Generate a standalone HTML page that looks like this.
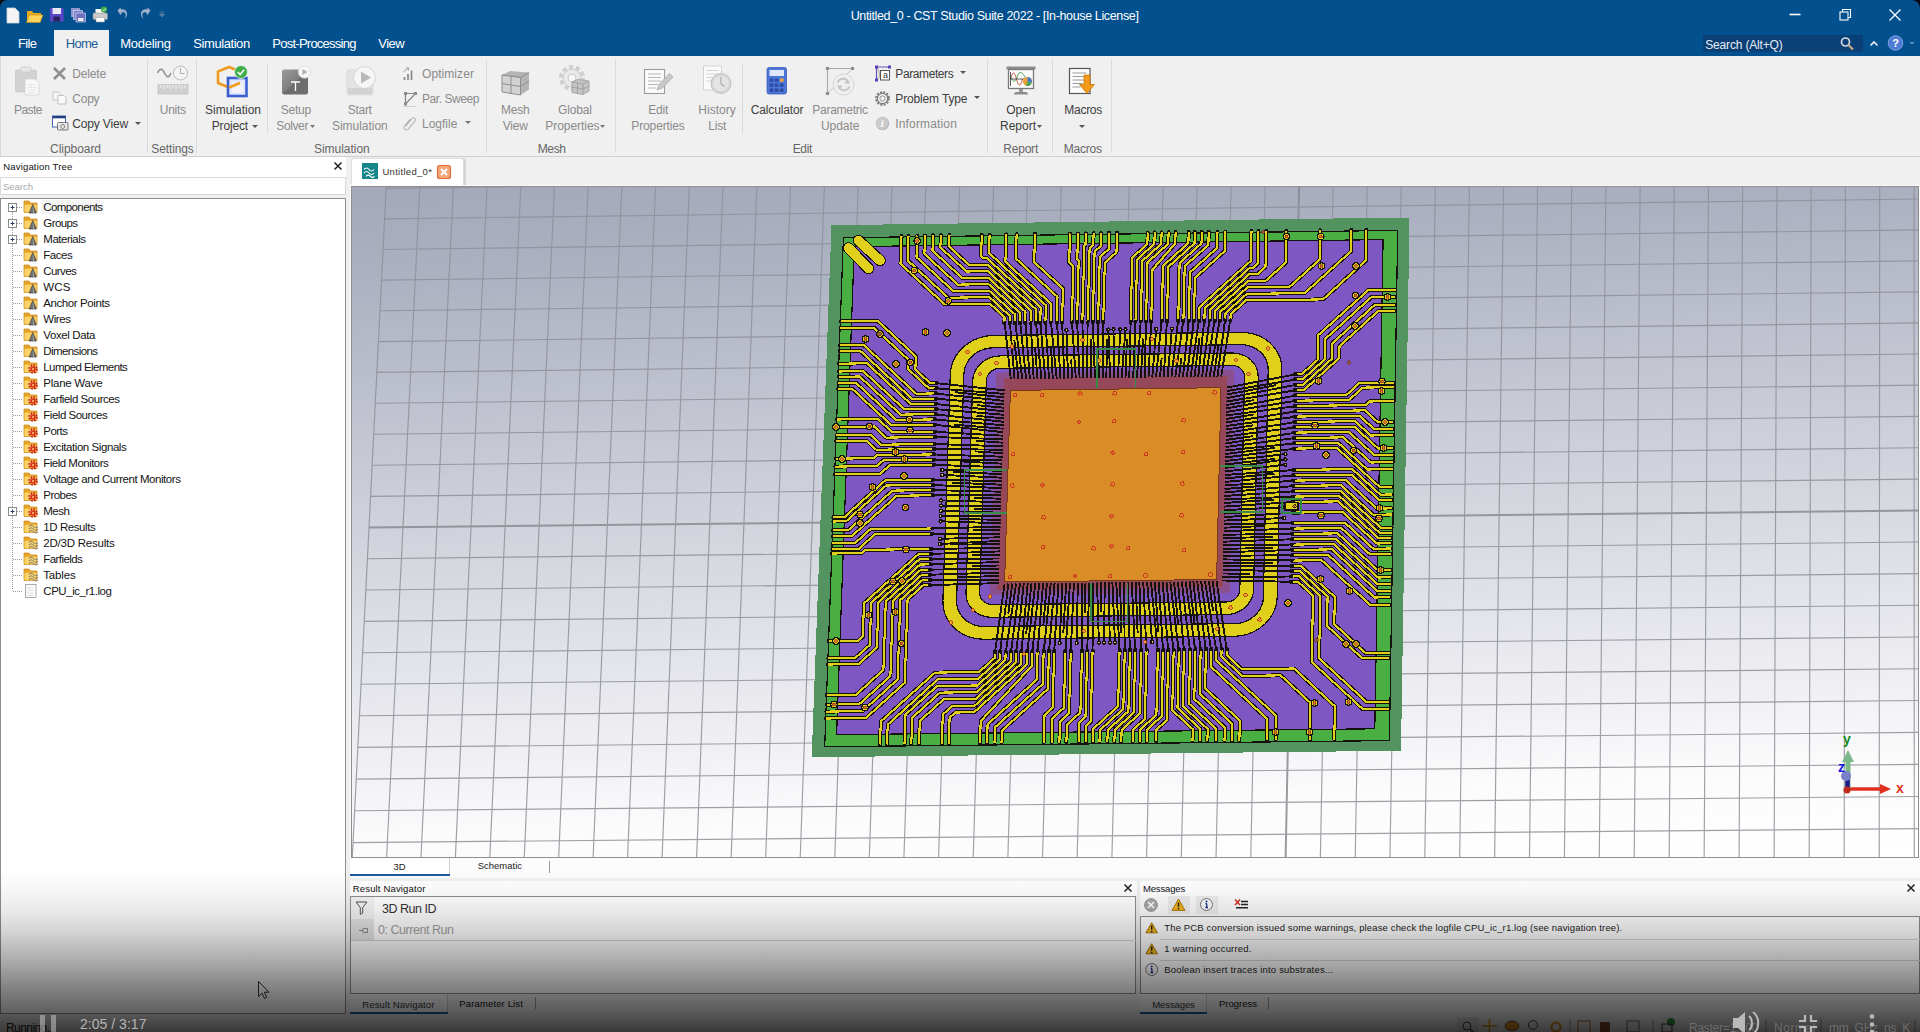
<!DOCTYPE html><html><head><meta charset="utf-8"><title>CST</title><style>html,body{margin:0;padding:0;}body{width:1920px;height:1032px;overflow:hidden;position:relative;background:#f0f0f0;font-family:"Liberation Sans",sans-serif;}
.b{position:absolute;display:block;}
.t{position:absolute;white-space:pre;font-family:"Liberation Sans",sans-serif;}</style></head><body>
<domain style="display:none">Computer-Use</domain>
<div class="b" style="left:0px;top:0px;width:1920px;height:56px;background:#02508d;"></div>
<div class="b" style="left:0;top:0;width:7px;height:7px;background:radial-gradient(circle at 100% 100%,rgba(0,0,0,0) 6.3px,#0a0a10 7.2px);"></div>
<div class="b" style="left:1912px;top:0;width:8px;height:8px;background:radial-gradient(circle at 0% 100%,rgba(0,0,0,0) 7.3px,#0a0a10 8.2px);"></div>
<svg class="b" style="left:0px;top:0px;" width="180" height="30" viewBox="0 0 180 30"><path d="M7 8h8l4 4v11H7z" fill="#f4f4f4" stroke="#cfd4da" stroke-width=".8"/><path d="M27 11h5l1.5 2H41v9H27z" fill="#e8a81c"/><path d="M29.5 15H43l-3 7.5H26.5z" fill="#ffd45c" stroke="#c88d10" stroke-width=".6"/><rect x="50" y="8" width="13.5" height="13.5" fill="#5b46c8"/><rect x="52.5" y="8" width="8.5" height="6" fill="#e8e8f4"/><rect x="53.5" y="16.5" width="6.5" height="5" fill="#2a2460"/><rect x="71" y="8" width="9" height="9" fill="#8f95cf"/><rect x="73.5" y="10.5" width="9" height="9" fill="#7d83c4" stroke="#dfe3ff" stroke-width=".6"/><rect x="76" y="13" width="9.500" height="9" fill="#6c70bd" stroke="#dfe3ff" stroke-width=".6"/><rect x="78" y="18" width="5.500" height="3" fill="#eee"/><rect x="95.500" y="9" width="9" height="5" fill="#fff"/><rect x="93" y="13" width="14.500" height="6.500" rx="1" fill="#c9c9c9" stroke="#8e8e8e" stroke-width=".6"/><rect x="96" y="17.500" width="8.500" height="4.500" fill="#fff" stroke="#999" stroke-width=".5"/><circle cx="104" cy="9.500" r="3" fill="#39a845"/><path d="M102.500 9.500l1.200 1.200 2-2.300" stroke="#fff" stroke-width=".9" fill="none"/><path d="M117.500 10.500l3 4.500 1.500-2.500c3-1 5 1.500 2.500 6.500 5-4.500 2-11-3.500-9.500l-.5-2z" fill="#9fb1c8"/><path d="M150.500 10.500l-3 4.500-1.500-2.500c-3-1-5 1.500-2.500 6.500-5-4.500-2-11 3.500-9.500l.5-2z" fill="#9fb1c8"/><path d="M159.500 12h5M159.500 14h5l-2.500 3z" fill="#5f7fa4" stroke="#5f7fa4" stroke-width=".8"/></svg>
<div class="t" style="left:850.70px;top:7.95px;font-size:12.5px;line-height:16.5px;color:#fff;letter-spacing:-0.359px;">Untitled_0 - CST Studio Suite 2022 - [In-house License]</div>
<svg class="b" style="left:0px;top:0px;" width="1920" height="30" viewBox="0 0 1920 30"><path d="M1789.500 14.500h11" stroke="#fff" stroke-width="1.600"/><rect x="1840" y="12" width="8" height="8" fill="none" stroke="#fff" stroke-width="1.100"/><path d="M1842.500 12v-2.500h8v8h-2.500" fill="none" stroke="#fff" stroke-width="1.100"/><path d="M1889.500 9.500l11 11M1900.500 9.500l-11 11" stroke="#fff" stroke-width="1.300"/></svg>
<div class="b" style="left:54px;top:30px;width:55px;height:27px;background:#f0f0f0;"></div>
<div class="t" style="left:18.00px;top:35.00px;font-size:13px;line-height:17px;color:#fff;letter-spacing:-0.662px;">File</div>
<div class="t" style="left:65.70px;top:35.00px;font-size:13px;line-height:17px;color:#1f5c99;letter-spacing:-0.670px;">Home</div>
<div class="t" style="left:120.30px;top:35.00px;font-size:13px;line-height:17px;color:#fff;letter-spacing:-0.295px;">Modeling</div>
<div class="t" style="left:193.30px;top:35.00px;font-size:13px;line-height:17px;color:#fff;letter-spacing:-0.430px;">Simulation</div>
<div class="t" style="left:272.30px;top:35.00px;font-size:13px;line-height:17px;color:#fff;letter-spacing:-0.750px;">Post-Processing</div>
<div class="t" style="left:378.30px;top:35.00px;font-size:13px;line-height:17px;color:#fff;letter-spacing:-0.561px;">View</div>
<div class="b" style="left:1703px;top:35px;width:160px;height:17px;background:#0b4076;"></div>
<div class="t" style="left:1705.30px;top:36.50px;font-size:12px;line-height:16px;color:#e6ecf4;letter-spacing:-0.178px;">Search (Alt+Q)</div>
<svg class="b" style="left:0px;top:0px;" width="1920" height="56" viewBox="0 0 1920 56"><circle cx="1845.500" cy="42" r="4" fill="none" stroke="#d9dde3" stroke-width="1.700"/><path d="M1848.500 45l4.500 4.500" stroke="#c9a98a" stroke-width="2.200"/><path d="M1870.500 45.500l3.500-3.500 3.500 3.500" fill="none" stroke="#e8edf3" stroke-width="1.700"/><circle cx="1895.500" cy="43" r="7.300" fill="#4c7bd6" stroke="#8fb0ea" stroke-width=".8"/><path d="M1909.500 42h5l-2.500 2.500z" fill="#6f90b8"/></svg>
<div class="t" style="left:1892.30px;top:36.00px;font-size:11px;line-height:15px;color:#fff;letter-spacing:0.000px;font-weight:bold;">?</div>
<div class="b" style="left:0px;top:56px;width:1920px;height:100px;background:#f0f0f0;"></div>
<div class="b" style="left:0px;top:156px;width:1920px;height:1px;background:#cfcfcf;"></div>
<div class="b" style="left:0px;top:56px;width:1px;height:100px;background:#d8d8d8;"></div>
<div class="b" style="left:147.2px;top:60px;width:1px;height:93px;background:#dadada;"></div>
<div class="b" style="left:196.2px;top:60px;width:1px;height:93px;background:#dadada;"></div>
<div class="b" style="left:486.2px;top:60px;width:1px;height:93px;background:#dadada;"></div>
<div class="b" style="left:615.2px;top:60px;width:1px;height:93px;background:#dadada;"></div>
<div class="b" style="left:986.9px;top:60px;width:1px;height:93px;background:#dadada;"></div>
<div class="b" style="left:1052.2px;top:60px;width:1px;height:93px;background:#dadada;"></div>
<div class="b" style="left:1111px;top:60px;width:1px;height:93px;background:#dadada;"></div>
<div class="b" style="left:266.5px;top:64px;width:1px;height:69px;background:#dadada;"></div>
<div class="b" style="left:741.5px;top:64px;width:1px;height:69px;background:#dadada;"></div>
<div class="t" style="left:14.00px;top:102.00px;font-size:12px;line-height:16px;color:#8a8a8a;letter-spacing:-0.537px;">Paste</div>
<div class="t" style="left:72.30px;top:65.70px;font-size:12px;line-height:16px;color:#8a8a8a;letter-spacing:-0.165px;">Delete</div>
<div class="t" style="left:72.30px;top:90.70px;font-size:12px;line-height:16px;color:#8a8a8a;letter-spacing:-0.253px;">Copy</div>
<div class="t" style="left:72.30px;top:115.70px;font-size:12px;line-height:16px;color:#3c3c3c;letter-spacing:-0.160px;">Copy View</div>
<svg class="b" style="left:134.7px;top:122px;" width="6" height="3" viewBox="0 0 6 3"><path d="M0 0H6 L3 3Z" fill="#555"/></svg>
<div class="t" style="left:50.00px;top:141.20px;font-size:12px;line-height:16px;color:#666;letter-spacing:-0.040px;">Clipboard</div>
<svg class="b" style="left:0px;top:56px;" width="1920" height="100" viewBox="0 56 1920 100"><rect x="15.500" y="70" width="21" height="22" rx="1.500" fill="#d3d3d3" stroke="#c2c2c2" stroke-width=".6"/><rect x="21" y="67" width="10" height="5" rx="1" fill="#e6e6e6" stroke="#c4c4c4" stroke-width=".6"/><path d="M25 79h10l4 4v12H25z" fill="#f8f8f8" stroke="#d0d0d0" stroke-width=".7"/><path d="M28 85h8M28 87.500h8M28 90h8M28 92.500h8" stroke="#ddd" stroke-width=".7"/><path d="M54 68l11 11M65 68l-11 11" stroke="#8f8f8f" stroke-width="2.600"/><path d="M53 92h6l2 2v6h-8z" fill="#f4f4f4" stroke="#b8b8b8" stroke-width=".7"/><path d="M58 95.500h6l2 2v6.500h-8z" fill="#f9f9f9" stroke="#b0b0b0" stroke-width=".7"/><rect x="52.500" y="116" width="13" height="11" fill="#fff" stroke="#2f57a5" stroke-width=".9"/><rect x="52.500" y="116" width="13" height="2.300" fill="#23407d"/><rect x="57.500" y="122.500" width="10.500" height="7.500" rx="1" fill="#e9e9e9" stroke="#6a6a6a" stroke-width=".9"/><circle cx="62.700" cy="126.500" r="2" fill="none" stroke="#666" stroke-width=".8"/><path d="M157.500 73c2.500-5 4.500-5 7 0s4.500 5 6.500 0" fill="none" stroke="#8c8c8c" stroke-width="1.400"/><circle cx="180.500" cy="73" r="7" fill="#f4f4f4" stroke="#b4b4b4" stroke-width=".9"/><path d="M180.500 68v5.500h4" fill="none" stroke="#aaa" stroke-width=".9"/><rect x="158" y="84.500" width="30" height="9.500" fill="#cfcfcf" stroke="#bdbdbd" stroke-width=".6"/><path d="M161 85v3M164 85v4.500M167 85v3M170 85v4.500M173 85v3M176 85v4.500M179 85v3M182 85v4.500M185 85v3" stroke="#fafafa" stroke-width=".8"/><path d="M218 71.500l11-4.500 11 4.500v11.500l-11 4.500-11-4.500z" fill="none" stroke="#ef9b20" stroke-width="2.600" stroke-linejoin="round"/><rect x="228" y="78" width="18.500" height="18" fill="#dfe6ff" stroke="#3a5fd0" stroke-width="2.600"/><rect x="232" y="82.500" width="11" height="10" fill="#f4f4f8"/><path d="M229 87.500l11-4.500" stroke="#ef9b20" stroke-width="2.600"/><circle cx="241" cy="72" r="6.500" fill="#3fae49" stroke="#e8f5e8" stroke-width=".8"/><path d="M237.800 72l2.300 2.500 4-4.800" stroke="#fff" stroke-width="1.500" fill="none"/><defs><linearGradient id="gs" x1="0" y1="0" x2="1" y2="1"><stop offset="0" stop-color="#9a9a9a"/><stop offset=".5" stop-color="#7e7e7e"/><stop offset=".51" stop-color="#6c6c6c"/><stop offset="1" stop-color="#707070"/></linearGradient></defs><rect x="282" y="69.500" width="26" height="25" rx="2" fill="url(#gs)"/><path d="M291 82h9M295.500 82v9" stroke="#fff" stroke-width="1.300"/><circle cx="304.500" cy="72" r="6.200" fill="#f6f6f6" stroke="#d8d8d8" stroke-width=".8"/><path d="M302.500 69l5 3-5 3z" fill="#b0b0b0"/><rect x="347" y="70" width="26" height="25" rx="2" fill="#e3e3e3" stroke="#d2d2d2" stroke-width=".7"/><rect x="348" y="88" width="24" height="6" fill="#d2d2d2"/><circle cx="364.500" cy="77.500" r="11" fill="#f5f5f5" stroke="#cfcfcf" stroke-width=".9"/><path d="M361 71.500l10 6-10 6z" fill="#b8b8b8"/><path d="M404.500 80v-3M408 80v-6M411.500 80v-9.500" stroke="#8a8a8a" stroke-width="1.700"/><path d="M403.500 72l5-4m0 0h-2.500m2.500 0v2.500" stroke="#9a9a9a" stroke-width=".9" fill="none"/><path d="M405.500 104v-10.500h10.500M405.500 104l9.500-10" stroke="#858585" stroke-width="1.200" fill="none"/><rect x="404" y="102.500" width="3" height="3" fill="#8a8a8a"/><rect x="404" y="92" width="3" height="3" fill="#8a8a8a"/><rect x="414" y="92" width="3" height="3" fill="#8a8a8a"/><path d="M403 106.500h13" stroke="#d0d0d0" stroke-width="1"/><path d="M406 126l6-7.500c1.500-1.800 4.500.3 3 2.300l-6.500 8c-2.300 2.700-6-.3-3.800-3l5.500-6.700" fill="none" stroke="#b5b5b5" stroke-width="1.100"/><path d="M502 75l8-4 19 1.500v17l-8.500 5.500-18.500-3z" fill="#b4b4b4"/><path d="M502 75l18.500 2.500 8.500-5M520.500 77.500V95M502 83.500l18.500 3 8.500-5.500M511 76.300V93.500M510 71l0 0" stroke="#8c8c8c" stroke-width="1" fill="none"/><path d="M502 75l18.500 2.500V95L502 92z" fill="#d2d2d2" stroke="#8f8f8f" stroke-width="1"/><path d="M502 83.500l18.500 3M511 76.300v17" stroke="#8f8f8f" stroke-width="1"/><circle cx="572" cy="78" r="11" fill="none" stroke="#d0d0d0" stroke-width="4" stroke-dasharray="4.300 2.610"/><circle cx="572" cy="78" r="9" fill="#e9e9e9" stroke="#c6c6c6" stroke-width=".9"/><circle cx="572" cy="78" r="4" fill="#f6f6f6" stroke="#c4c4c4" stroke-width=".9"/><path d="M572 82l6-2.500 11 1.500v10l-6 3.500-11-2z" fill="#c4c4c4" stroke="#9a9a9a" stroke-width=".8"/><path d="M572 82l11 2 6-3M583 84v10.500M577.500 83v10.500M572 87l11 2 6-3" stroke="#9a9a9a" stroke-width=".8" fill="none"/><rect x="644.500" y="69.500" width="20" height="24" fill="#fafafa" stroke="#9c9c9c" stroke-width="1.100"/><path d="M648 74h13M648 77.500h13M648 81h13M648 84.500h10M648 88h8" stroke="#b8b8b8" stroke-width="1"/><path d="M657 90l2-5.500 10.500-11 3.500 3.500-10.500 11z" fill="#c9c9c9" stroke="#a9a9a9" stroke-width=".8"/><rect x="703.500" y="66" width="18" height="24" fill="#fafafa" stroke="#cfcfcf" stroke-width=".9"/><path d="M706.500 70.500h12M706.500 74h12M706.500 77.500h8M706.500 81h6" stroke="#d2d2d2" stroke-width="1"/><circle cx="721" cy="83.500" r="10" fill="#d6d6d6" stroke="#c2c2c2" stroke-width="1"/><circle cx="721" cy="83.500" r="7.800" fill="#e4e4e4"/><path d="M721 77v7l3.500 2.500" fill="none" stroke="#a8a8a8" stroke-width="1.100"/><rect x="767" y="67.500" width="19.500" height="26.500" rx="2" fill="#4d76d9" stroke="#3a5dba" stroke-width=".8"/><rect x="769.500" y="70" width="14.500" height="6" fill="#dfe8fb"/><rect x="769.7" y="78.5" width="3.700" height="3.300" fill="#2c4aa0"/><rect x="774.8" y="78.5" width="3.700" height="3.300" fill="#2c4aa0"/><rect x="779.9" y="78.5" width="3.700" height="3.300" fill="#f0a23a"/><rect x="769.7" y="83.5" width="3.700" height="3.300" fill="#2c4aa0"/><rect x="774.8" y="83.5" width="3.700" height="3.300" fill="#2c4aa0"/><rect x="779.9" y="83.5" width="3.700" height="3.300" fill="#2c4aa0"/><rect x="769.7" y="88.5" width="3.700" height="3.300" fill="#2c4aa0"/><rect x="774.8" y="88.5" width="3.700" height="3.300" fill="#2c4aa0"/><rect x="779.9" y="88.5" width="3.700" height="3.300" fill="#2c4aa0"/><path d="M827.500 93.500v-25h25" fill="none" stroke="#a9a9a9" stroke-width="1.100"/><path d="M827.500 93.500l25-25" stroke="#c2c2c2" stroke-width="1"/><circle cx="827.500" cy="93.500" r="1.800" fill="#8a8a8a"/><circle cx="827.500" cy="68.500" r="1.800" fill="#8a8a8a"/><circle cx="852.500" cy="68.500" r="1.800" fill="#8a8a8a"/><circle cx="843.500" cy="84.500" r="10.500" fill="#efefef" stroke="#d6d6d6" stroke-width="1"/><path d="M837.500 82.500c2-5 9-5 11 0h-3.500M849.500 86.500c-2 5-9 5-11 0h3.500" fill="none" stroke="#c4c4c4" stroke-width="2"/><path d="M876.500 80v-13h13" fill="none" stroke="#6b4fc0" stroke-width="1.200"/><path d="M876.500 80c4-2 4-8 0-13" fill="none" stroke="#888" stroke-width=".8"/><rect x="875" y="78.500" width="3" height="3" fill="#5a3fb5"/><rect x="875" y="65.500" width="3" height="3" fill="#5a3fb5"/><rect x="888" y="65.500" width="3" height="3" fill="#5a3fb5"/><rect x="880.500" y="70.500" width="9" height="9.500" fill="#fff" stroke="#444" stroke-width=".9"/><circle cx="882.500" cy="98.500" r="5.200" fill="none" stroke="#7a7a7a" stroke-width="1.200"/><circle cx="882.500" cy="98.500" r="6.500" fill="none" stroke="#7a7a7a" stroke-width="1.800" stroke-dasharray="2 1.400"/><circle cx="882.500" cy="98.500" r="2.600" fill="none" stroke="#8a8a8a" stroke-width=".9"/><circle cx="882.500" cy="123.500" r="6.800" fill="#bdbdbd"/><circle cx="882" cy="123" r="6" fill="#cbcbcb"/><rect x="1006.500" y="66.500" width="29" height="3" fill="#8c8c8c"/><rect x="1008.500" y="69.500" width="25" height="19" fill="#fbfbfb" stroke="#7a7a7a" stroke-width="1.300"/><path d="M1010.500 79c2-8 4-8 6 0s4 8 6 0" fill="none" stroke="#d04a3a" stroke-width="1"/><path d="M1010.500 76c3 8 5 6 7 0s5-4 8 2" fill="none" stroke="#3f9a48" stroke-width=".9"/><path d="M1010.500 72v14M1010 79h14" stroke="#333" stroke-width=".8"/><circle cx="1027.500" cy="81.500" r="4.500" fill="#e9a13a"/><path d="M1027.500 81.500v-4.500a4.500 4.500 0 0 1 4.300 5.800z" fill="#4a78d0"/><path d="M1027.500 81.500l4.300 1.300a4.500 4.500 0 0 1-5.800 3z" fill="#4aa85a"/><rect x="1019" y="89" width="4" height="3.500" fill="#9a9a9a"/><path d="M1013.500 94.500h15l-2-2.500h-11z" fill="#8c8c8c"/><rect x="1069.500" y="68.500" width="20.500" height="25" fill="#fdfdfd" stroke="#555" stroke-width="1.200"/><path d="M1072.500 73h14M1072.500 76.500h14M1072.500 80h14M1072.500 83.500h10M1072.500 87h8" stroke="#9a9a9a" stroke-width="1"/><path d="M1084 75h6v9.500h4.500l-7.500 9-7.500-9h4.500z" fill="#f39a1d" stroke="#c97a0d" stroke-width=".8"/></svg>
<div class="t" style="left:880.80px;top:116.50px;font-size:10px;line-height:14px;color:#fff;letter-spacing:0.000px;font-weight:bold;font-style:italic;font-family:'Liberation Serif',serif;">i</div>
<div class="t" style="left:883.00px;top:68.80px;font-size:9px;line-height:13px;color:#333;letter-spacing:0.000px;">a</div>
<div class="t" style="left:159.70px;top:102.00px;font-size:12px;line-height:16px;color:#8a8a8a;letter-spacing:-0.208px;">Units</div>
<div class="t" style="left:151.30px;top:141.20px;font-size:12px;line-height:16px;color:#666;letter-spacing:-0.120px;">Settings</div>
<div class="t" style="left:205.00px;top:102.00px;font-size:12px;line-height:16px;color:#3c3c3c;letter-spacing:-0.003px;">Simulation</div>
<div class="t" style="left:211.70px;top:118.00px;font-size:12px;line-height:16px;color:#3c3c3c;letter-spacing:-0.150px;">Project</div>
<svg class="b" style="left:251.5px;top:124.5px;" width="6" height="3" viewBox="0 0 6 3"><path d="M0 0H6 L3 3Z" fill="#555"/></svg>
<div class="t" style="left:280.70px;top:102.00px;font-size:12px;line-height:16px;color:#8a8a8a;letter-spacing:-0.212px;">Setup</div>
<div class="t" style="left:276.30px;top:118.00px;font-size:12px;line-height:16px;color:#8a8a8a;letter-spacing:-0.386px;">Solver</div>
<svg class="b" style="left:309.5px;top:124.5px;" width="5" height="3" viewBox="0 0 5 3"><path d="M0 0H5 L2.5 3Z" fill="#777"/></svg>
<div class="t" style="left:347.70px;top:102.00px;font-size:12px;line-height:16px;color:#8a8a8a;letter-spacing:-0.268px;">Start</div>
<div class="t" style="left:332.00px;top:118.00px;font-size:12px;line-height:16px;color:#8a8a8a;letter-spacing:-0.033px;">Simulation</div>
<div class="t" style="left:422.00px;top:65.70px;font-size:12px;line-height:16px;color:#8a8a8a;letter-spacing:0.073px;">Optimizer</div>
<div class="t" style="left:422.00px;top:90.70px;font-size:12px;line-height:16px;color:#8a8a8a;letter-spacing:-0.437px;">Par. Sweep</div>
<div class="t" style="left:422.00px;top:115.70px;font-size:12px;line-height:16px;color:#8a8a8a;letter-spacing:-0.009px;">Logfile</div>
<svg class="b" style="left:464.7px;top:121px;" width="6" height="3" viewBox="0 0 6 3"><path d="M0 0H6 L3 3Z" fill="#777"/></svg>
<div class="t" style="left:314.00px;top:141.20px;font-size:12px;line-height:16px;color:#666;letter-spacing:-0.033px;">Simulation</div>
<div class="t" style="left:501.00px;top:102.00px;font-size:12px;line-height:16px;color:#8a8a8a;letter-spacing:-0.261px;">Mesh</div>
<div class="t" style="left:502.70px;top:118.00px;font-size:12px;line-height:16px;color:#8a8a8a;letter-spacing:-0.198px;">View</div>
<div class="t" style="left:558.00px;top:102.00px;font-size:12px;line-height:16px;color:#8a8a8a;letter-spacing:-0.165px;">Global</div>
<div class="t" style="left:545.30px;top:118.00px;font-size:12px;line-height:16px;color:#8a8a8a;letter-spacing:-0.049px;">Properties</div>
<svg class="b" style="left:600px;top:124.5px;" width="5" height="3" viewBox="0 0 5 3"><path d="M0 0H5 L2.5 3Z" fill="#777"/></svg>
<div class="t" style="left:537.70px;top:141.20px;font-size:12px;line-height:16px;color:#666;letter-spacing:-0.336px;">Mesh</div>
<div class="t" style="left:648.30px;top:102.00px;font-size:12px;line-height:16px;color:#8a8a8a;letter-spacing:-0.244px;">Edit</div>
<div class="t" style="left:631.30px;top:118.00px;font-size:12px;line-height:16px;color:#8a8a8a;letter-spacing:-0.129px;">Properties</div>
<div class="t" style="left:698.30px;top:102.00px;font-size:12px;line-height:16px;color:#8a8a8a;letter-spacing:0.009px;">History</div>
<div class="t" style="left:708.30px;top:118.00px;font-size:12px;line-height:16px;color:#8a8a8a;letter-spacing:-0.243px;">List</div>
<div class="t" style="left:750.70px;top:102.00px;font-size:12px;line-height:16px;color:#3c3c3c;letter-spacing:-0.142px;">Calculator</div>
<div class="t" style="left:812.30px;top:102.00px;font-size:12px;line-height:16px;color:#8a8a8a;letter-spacing:-0.261px;">Parametric</div>
<div class="t" style="left:821.00px;top:118.00px;font-size:12px;line-height:16px;color:#8a8a8a;letter-spacing:-0.066px;">Update</div>
<div class="t" style="left:895.30px;top:65.70px;font-size:12px;line-height:16px;color:#3c3c3c;letter-spacing:-0.402px;">Parameters</div>
<svg class="b" style="left:960.3px;top:71px;" width="6" height="3" viewBox="0 0 6 3"><path d="M0 0H6 L3 3Z" fill="#555"/></svg>
<div class="t" style="left:895.30px;top:90.70px;font-size:12px;line-height:16px;color:#3c3c3c;letter-spacing:-0.151px;">Problem Type</div>
<svg class="b" style="left:974.3px;top:96px;" width="6" height="3" viewBox="0 0 6 3"><path d="M0 0H6 L3 3Z" fill="#555"/></svg>
<div class="t" style="left:895.30px;top:115.70px;font-size:12px;line-height:16px;color:#8a8a8a;letter-spacing:0.152px;">Information</div>
<div class="t" style="left:792.70px;top:141.20px;font-size:12px;line-height:16px;color:#666;letter-spacing:-0.344px;">Edit</div>
<div class="t" style="left:1006.30px;top:102.00px;font-size:12px;line-height:16px;color:#3c3c3c;letter-spacing:-0.089px;">Open</div>
<div class="t" style="left:1000.00px;top:118.00px;font-size:12px;line-height:16px;color:#3c3c3c;letter-spacing:-0.003px;">Report</div>
<svg class="b" style="left:1037px;top:124.5px;" width="5" height="3" viewBox="0 0 5 3"><path d="M0 0H5 L2.5 3Z" fill="#555"/></svg>
<div class="t" style="left:1003.30px;top:141.20px;font-size:12px;line-height:16px;color:#666;letter-spacing:-0.220px;">Report</div>
<div class="t" style="left:1064.30px;top:102.00px;font-size:12px;line-height:16px;color:#3c3c3c;letter-spacing:-0.273px;">Macros</div>
<svg class="b" style="left:1079px;top:124.5px;" width="6" height="3" viewBox="0 0 6 3"><path d="M0 0H6 L3 3Z" fill="#555"/></svg>
<div class="t" style="left:1063.70px;top:141.20px;font-size:12px;line-height:16px;color:#666;letter-spacing:-0.223px;">Macros</div>
<div class="b" style="left:0px;top:157px;width:1920px;height:875px;background:#f0f0f0;"></div>
<div class="b" style="left:0px;top:157px;width:346px;height:20px;background:#fff;"></div>
<div class="t" style="left:3.20px;top:160.05px;font-size:9.5px;line-height:13.5px;color:#111;letter-spacing:0.184px;">Navigation Tree</div>
<svg class="b" style="left:333px;top:161px;" width="10" height="10" viewBox="0 0 10 10"><path d="M1.500 1.500l7 7M8.500 1.500l-7 7" stroke="#222" stroke-width="1.500"/></svg>
<div class="b" style="left:0px;top:177px;width:346px;height:18px;background:#fff;border:1px solid #d9d9d9;box-sizing:border-box;"></div>
<div class="t" style="left:3.00px;top:179.55px;font-size:9.5px;line-height:13.5px;color:#a8a8a8;letter-spacing:-0.017px;">Search</div>
<div class="b" style="left:0px;top:198px;width:346px;height:816px;background:#fff;border:1px solid #8e8e8e;box-sizing:border-box;"></div>
<svg class="b" style="left:0px;top:198px;" width="346" height="420" viewBox="0 198 346 420"><path d="M12.500 212V590.500" stroke="#9a9a9a" stroke-width="1" stroke-dasharray="1 1"/><path d="M17 207.5H23" stroke="#9a9a9a" stroke-width="1" stroke-dasharray="1 1"/><rect x="8.500" y="203.5" width="8" height="8" fill="#fff" stroke="#8a8a8a" stroke-width="1"/><path d="M10.500 207.5h4M12.500 205.5v4" stroke="#2a3a6a" stroke-width="1"/><path d="M24 201h5l1.500 2h6.500v9.500h-13z" fill="#e9a428" stroke="#c5861a" stroke-width=".7"/><path d="M24.5 204.7h12v7.500h-12z" fill="#fbd268"/><path d="M32.8 204.5l3.600 8.500h-7.200z" fill="#707070" stroke="#3c3c3c" stroke-width=".7"/><path d="M32.8 204.7l1.800 8.500h-1.800z" fill="#9a9a9a"/><path d="M17 223.5H23" stroke="#9a9a9a" stroke-width="1" stroke-dasharray="1 1"/><rect x="8.500" y="219.5" width="8" height="8" fill="#fff" stroke="#8a8a8a" stroke-width="1"/><path d="M10.500 223.5h4M12.500 221.5v4" stroke="#2a3a6a" stroke-width="1"/><path d="M24 217h5l1.500 2h6.500v9.500h-13z" fill="#e9a428" stroke="#c5861a" stroke-width=".7"/><path d="M24.5 220.7h12v7.500h-12z" fill="#fbd268"/><path d="M32.8 220.5l3.600 8.500h-7.200z" fill="#707070" stroke="#3c3c3c" stroke-width=".7"/><path d="M32.8 220.7l1.800 8.500h-1.800z" fill="#9a9a9a"/><path d="M17 239.5H23" stroke="#9a9a9a" stroke-width="1" stroke-dasharray="1 1"/><rect x="8.500" y="235.5" width="8" height="8" fill="#fff" stroke="#8a8a8a" stroke-width="1"/><path d="M10.500 239.5h4M12.500 237.5v4" stroke="#2a3a6a" stroke-width="1"/><path d="M24 233h5l1.500 2h6.500v9.500h-13z" fill="#e9a428" stroke="#c5861a" stroke-width=".7"/><path d="M24.5 236.7h12v7.500h-12z" fill="#fbd268"/><path d="M32.8 236.5l3.600 8.500h-7.200z" fill="#707070" stroke="#3c3c3c" stroke-width=".7"/><path d="M32.8 236.7l1.800 8.500h-1.800z" fill="#9a9a9a"/><path d="M13 255.5H23" stroke="#9a9a9a" stroke-width="1" stroke-dasharray="1 1"/><path d="M24 249h5l1.500 2h6.500v9.500h-13z" fill="#e9a428" stroke="#c5861a" stroke-width=".7"/><path d="M24.5 252.7h12v7.500h-12z" fill="#fbd268"/><path d="M32.8 252.5l3.600 8.500h-7.200z" fill="#707070" stroke="#3c3c3c" stroke-width=".7"/><path d="M32.8 252.7l1.800 8.500h-1.800z" fill="#9a9a9a"/><path d="M13 271.5H23" stroke="#9a9a9a" stroke-width="1" stroke-dasharray="1 1"/><path d="M24 265h5l1.500 2h6.500v9.500h-13z" fill="#e9a428" stroke="#c5861a" stroke-width=".7"/><path d="M24.5 268.7h12v7.500h-12z" fill="#fbd268"/><path d="M32.8 268.5l3.600 8.500h-7.200z" fill="#707070" stroke="#3c3c3c" stroke-width=".7"/><path d="M32.8 268.7l1.800 8.500h-1.800z" fill="#9a9a9a"/><path d="M13 287.5H23" stroke="#9a9a9a" stroke-width="1" stroke-dasharray="1 1"/><path d="M24 281h5l1.500 2h6.500v9.500h-13z" fill="#e9a428" stroke="#c5861a" stroke-width=".7"/><path d="M24.5 284.7h12v7.500h-12z" fill="#fbd268"/><path d="M32.8 284.5l3.600 8.500h-7.200z" fill="#707070" stroke="#3c3c3c" stroke-width=".7"/><path d="M32.8 284.7l1.800 8.500h-1.800z" fill="#9a9a9a"/><path d="M13 303.5H23" stroke="#9a9a9a" stroke-width="1" stroke-dasharray="1 1"/><path d="M24 297h5l1.500 2h6.500v9.500h-13z" fill="#e9a428" stroke="#c5861a" stroke-width=".7"/><path d="M24.5 300.7h12v7.500h-12z" fill="#fbd268"/><path d="M32.8 300.5l3.600 8.500h-7.200z" fill="#707070" stroke="#3c3c3c" stroke-width=".7"/><path d="M32.8 300.7l1.800 8.500h-1.800z" fill="#9a9a9a"/><path d="M13 319.5H23" stroke="#9a9a9a" stroke-width="1" stroke-dasharray="1 1"/><path d="M24 313h5l1.500 2h6.500v9.500h-13z" fill="#e9a428" stroke="#c5861a" stroke-width=".7"/><path d="M24.5 316.7h12v7.500h-12z" fill="#fbd268"/><path d="M32.8 316.5l3.600 8.500h-7.200z" fill="#707070" stroke="#3c3c3c" stroke-width=".7"/><path d="M32.8 316.7l1.800 8.500h-1.800z" fill="#9a9a9a"/><path d="M13 335.5H23" stroke="#9a9a9a" stroke-width="1" stroke-dasharray="1 1"/><path d="M24 329h5l1.500 2h6.500v9.500h-13z" fill="#e9a428" stroke="#c5861a" stroke-width=".7"/><path d="M24.5 332.7h12v7.500h-12z" fill="#fbd268"/><path d="M32.8 332.5l3.600 8.500h-7.200z" fill="#707070" stroke="#3c3c3c" stroke-width=".7"/><path d="M32.8 332.7l1.800 8.500h-1.800z" fill="#9a9a9a"/><path d="M13 351.5H23" stroke="#9a9a9a" stroke-width="1" stroke-dasharray="1 1"/><path d="M24 345h5l1.500 2h6.500v9.500h-13z" fill="#e9a428" stroke="#c5861a" stroke-width=".7"/><path d="M24.5 348.7h12v7.500h-12z" fill="#fbd268"/><path d="M32.8 348.5l3.600 8.500h-7.200z" fill="#707070" stroke="#3c3c3c" stroke-width=".7"/><path d="M32.8 348.7l1.800 8.500h-1.800z" fill="#9a9a9a"/><path d="M13 367.5H23" stroke="#9a9a9a" stroke-width="1" stroke-dasharray="1 1"/><path d="M24 361h5l1.500 2h6.500v9.500h-13z" fill="#e9a428" stroke="#c5861a" stroke-width=".7"/><path d="M24.5 364.7h12v7.500h-12z" fill="#fbd268"/><circle cx="33" cy="369" r="3.600" fill="none" stroke="#c8261a" stroke-width="2.200" stroke-dasharray="1.700 1.130"/><circle cx="33" cy="369" r="2.600" fill="#d8341f"/><circle cx="33" cy="369" r="1.100" fill="#f8c060"/><path d="M13 383.5H23" stroke="#9a9a9a" stroke-width="1" stroke-dasharray="1 1"/><path d="M24 377h5l1.500 2h6.500v9.500h-13z" fill="#e9a428" stroke="#c5861a" stroke-width=".7"/><path d="M24.5 380.7h12v7.500h-12z" fill="#fbd268"/><circle cx="33" cy="385" r="3.600" fill="none" stroke="#c8261a" stroke-width="2.200" stroke-dasharray="1.700 1.130"/><circle cx="33" cy="385" r="2.600" fill="#d8341f"/><circle cx="33" cy="385" r="1.100" fill="#f8c060"/><path d="M13 399.5H23" stroke="#9a9a9a" stroke-width="1" stroke-dasharray="1 1"/><path d="M24 393h5l1.500 2h6.500v9.500h-13z" fill="#e9a428" stroke="#c5861a" stroke-width=".7"/><path d="M24.5 396.7h12v7.500h-12z" fill="#fbd268"/><circle cx="33" cy="401" r="3.600" fill="none" stroke="#c8261a" stroke-width="2.200" stroke-dasharray="1.700 1.130"/><circle cx="33" cy="401" r="2.600" fill="#d8341f"/><circle cx="33" cy="401" r="1.100" fill="#f8c060"/><path d="M13 415.5H23" stroke="#9a9a9a" stroke-width="1" stroke-dasharray="1 1"/><path d="M24 409h5l1.500 2h6.500v9.500h-13z" fill="#e9a428" stroke="#c5861a" stroke-width=".7"/><path d="M24.5 412.7h12v7.500h-12z" fill="#fbd268"/><circle cx="33" cy="417" r="3.600" fill="none" stroke="#c8261a" stroke-width="2.200" stroke-dasharray="1.700 1.130"/><circle cx="33" cy="417" r="2.600" fill="#d8341f"/><circle cx="33" cy="417" r="1.100" fill="#f8c060"/><path d="M13 431.5H23" stroke="#9a9a9a" stroke-width="1" stroke-dasharray="1 1"/><path d="M24 425h5l1.500 2h6.500v9.500h-13z" fill="#e9a428" stroke="#c5861a" stroke-width=".7"/><path d="M24.5 428.7h12v7.500h-12z" fill="#fbd268"/><circle cx="33" cy="433" r="3.600" fill="none" stroke="#c8261a" stroke-width="2.200" stroke-dasharray="1.700 1.130"/><circle cx="33" cy="433" r="2.600" fill="#d8341f"/><circle cx="33" cy="433" r="1.100" fill="#f8c060"/><path d="M13 447.5H23" stroke="#9a9a9a" stroke-width="1" stroke-dasharray="1 1"/><path d="M24 441h5l1.500 2h6.500v9.500h-13z" fill="#e9a428" stroke="#c5861a" stroke-width=".7"/><path d="M24.5 444.7h12v7.500h-12z" fill="#fbd268"/><circle cx="33" cy="449" r="3.600" fill="none" stroke="#c8261a" stroke-width="2.200" stroke-dasharray="1.700 1.130"/><circle cx="33" cy="449" r="2.600" fill="#d8341f"/><circle cx="33" cy="449" r="1.100" fill="#f8c060"/><path d="M13 463.5H23" stroke="#9a9a9a" stroke-width="1" stroke-dasharray="1 1"/><path d="M24 457h5l1.500 2h6.500v9.500h-13z" fill="#e9a428" stroke="#c5861a" stroke-width=".7"/><path d="M24.5 460.7h12v7.500h-12z" fill="#fbd268"/><circle cx="33" cy="465" r="3.600" fill="none" stroke="#c8261a" stroke-width="2.200" stroke-dasharray="1.700 1.130"/><circle cx="33" cy="465" r="2.600" fill="#d8341f"/><circle cx="33" cy="465" r="1.100" fill="#f8c060"/><path d="M13 479.5H23" stroke="#9a9a9a" stroke-width="1" stroke-dasharray="1 1"/><path d="M24 473h5l1.500 2h6.500v9.500h-13z" fill="#e9a428" stroke="#c5861a" stroke-width=".7"/><path d="M24.5 476.7h12v7.500h-12z" fill="#fbd268"/><circle cx="33" cy="481" r="3.600" fill="none" stroke="#c8261a" stroke-width="2.200" stroke-dasharray="1.700 1.130"/><circle cx="33" cy="481" r="2.600" fill="#d8341f"/><circle cx="33" cy="481" r="1.100" fill="#f8c060"/><path d="M13 495.5H23" stroke="#9a9a9a" stroke-width="1" stroke-dasharray="1 1"/><path d="M24 489h5l1.500 2h6.500v9.500h-13z" fill="#e9a428" stroke="#c5861a" stroke-width=".7"/><path d="M24.5 492.7h12v7.500h-12z" fill="#fbd268"/><circle cx="33" cy="497" r="3.600" fill="none" stroke="#c8261a" stroke-width="2.200" stroke-dasharray="1.700 1.130"/><circle cx="33" cy="497" r="2.600" fill="#d8341f"/><circle cx="33" cy="497" r="1.100" fill="#f8c060"/><path d="M17 511.5H23" stroke="#9a9a9a" stroke-width="1" stroke-dasharray="1 1"/><rect x="8.500" y="507.5" width="8" height="8" fill="#fff" stroke="#8a8a8a" stroke-width="1"/><path d="M10.500 511.5h4M12.500 509.5v4" stroke="#2a3a6a" stroke-width="1"/><path d="M24 505h5l1.500 2h6.500v9.500h-13z" fill="#e9a428" stroke="#c5861a" stroke-width=".7"/><path d="M24.5 508.7h12v7.500h-12z" fill="#fbd268"/><circle cx="33" cy="513" r="3.600" fill="none" stroke="#c8261a" stroke-width="2.200" stroke-dasharray="1.700 1.130"/><circle cx="33" cy="513" r="2.600" fill="#d8341f"/><circle cx="33" cy="513" r="1.100" fill="#f8c060"/><path d="M13 527.5H23" stroke="#9a9a9a" stroke-width="1" stroke-dasharray="1 1"/><path d="M24 521h5l1.500 2h6.500v9.500h-13z" fill="#e9a428" stroke="#c5861a" stroke-width=".7"/><path d="M24.5 524.7h12v7.500h-12z" fill="#fbd268"/><path d="M29 526.5c1.500-1.600 3-1.600 4.500 0s3 1.600 4.500 0" fill="none" stroke="#6a7078" stroke-width=".9"/><path d="M29 529.1c1.500-1.600 3-1.600 4.500 0s3 1.600 4.500 0" fill="none" stroke="#6a7078" stroke-width=".9"/><path d="M29 531.7c1.500-1.600 3-1.600 4.500 0s3 1.600 4.500 0" fill="none" stroke="#6a7078" stroke-width=".9"/><path d="M13 543.5H23" stroke="#9a9a9a" stroke-width="1" stroke-dasharray="1 1"/><path d="M24 537h5l1.500 2h6.500v9.500h-13z" fill="#e9a428" stroke="#c5861a" stroke-width=".7"/><path d="M24.5 540.7h12v7.500h-12z" fill="#fbd268"/><path d="M29 542.5c1.500-1.600 3-1.600 4.500 0s3 1.600 4.500 0" fill="none" stroke="#6a7078" stroke-width=".9"/><path d="M29 545.1c1.500-1.600 3-1.600 4.500 0s3 1.600 4.500 0" fill="none" stroke="#6a7078" stroke-width=".9"/><path d="M29 547.7c1.500-1.600 3-1.600 4.500 0s3 1.600 4.500 0" fill="none" stroke="#6a7078" stroke-width=".9"/><path d="M13 559.5H23" stroke="#9a9a9a" stroke-width="1" stroke-dasharray="1 1"/><path d="M24 553h5l1.500 2h6.500v9.500h-13z" fill="#e9a428" stroke="#c5861a" stroke-width=".7"/><path d="M24.5 556.7h12v7.500h-12z" fill="#fbd268"/><path d="M29 558.5c1.500-1.600 3-1.600 4.500 0s3 1.600 4.500 0" fill="none" stroke="#6a7078" stroke-width=".9"/><path d="M29 561.1c1.500-1.600 3-1.600 4.500 0s3 1.600 4.500 0" fill="none" stroke="#6a7078" stroke-width=".9"/><path d="M29 563.7c1.500-1.600 3-1.600 4.500 0s3 1.600 4.500 0" fill="none" stroke="#6a7078" stroke-width=".9"/><path d="M13 575.5H23" stroke="#9a9a9a" stroke-width="1" stroke-dasharray="1 1"/><path d="M24 569h5l1.500 2h6.500v9.500h-13z" fill="#e9a428" stroke="#c5861a" stroke-width=".7"/><path d="M24.5 572.7h12v7.500h-12z" fill="#fbd268"/><path d="M29 574.5c1.500-1.600 3-1.600 4.500 0s3 1.600 4.500 0" fill="none" stroke="#6a7078" stroke-width=".9"/><path d="M29 577.1c1.500-1.600 3-1.600 4.500 0s3 1.600 4.500 0" fill="none" stroke="#6a7078" stroke-width=".9"/><path d="M29 579.7c1.500-1.600 3-1.600 4.500 0s3 1.600 4.500 0" fill="none" stroke="#6a7078" stroke-width=".9"/><path d="M13 591.5H23" stroke="#9a9a9a" stroke-width="1" stroke-dasharray="1 1"/><rect x="25.5" y="584.5" width="10.500" height="13" fill="#fbfbfb" stroke="#9a9a9a" stroke-width=".8"/><path d="M27.5 588h6M27.5 590.5h6M27.5 593h6M27.5 595.5h6" stroke="#c2c2c2" stroke-width=".8" stroke-dasharray="1.2 .8"/></svg>
<div class="b" style="left:41px;top:200px;width:63px;height:15px;background:#f5f5f5;"></div>
<div class="t" style="left:43.30px;top:199.55px;font-size:11.5px;line-height:15.5px;color:#141414;letter-spacing:-0.601px;">Components</div>
<div class="t" style="left:43.30px;top:215.55px;font-size:11.5px;line-height:15.5px;color:#141414;letter-spacing:-0.586px;">Groups</div>
<div class="t" style="left:43.30px;top:231.55px;font-size:11.5px;line-height:15.5px;color:#141414;letter-spacing:-0.495px;">Materials</div>
<div class="t" style="left:43.30px;top:247.55px;font-size:11.5px;line-height:15.5px;color:#141414;letter-spacing:-0.464px;">Faces</div>
<div class="t" style="left:43.30px;top:263.55px;font-size:11.5px;line-height:15.5px;color:#141414;letter-spacing:-0.571px;">Curves</div>
<div class="t" style="left:43.30px;top:279.55px;font-size:11.5px;line-height:15.5px;color:#141414;letter-spacing:0.124px;">WCS</div>
<div class="t" style="left:43.30px;top:295.55px;font-size:11.5px;line-height:15.5px;color:#141414;letter-spacing:-0.415px;">Anchor Points</div>
<div class="t" style="left:43.30px;top:311.55px;font-size:11.5px;line-height:15.5px;color:#141414;letter-spacing:-0.437px;">Wires</div>
<div class="t" style="left:43.30px;top:327.55px;font-size:11.5px;line-height:15.5px;color:#141414;letter-spacing:-0.392px;">Voxel Data</div>
<div class="t" style="left:43.30px;top:343.55px;font-size:11.5px;line-height:15.5px;color:#141414;letter-spacing:-0.588px;">Dimensions</div>
<div class="t" style="left:43.30px;top:359.55px;font-size:11.5px;line-height:15.5px;color:#141414;letter-spacing:-0.580px;">Lumped Elements</div>
<div class="t" style="left:43.30px;top:375.55px;font-size:11.5px;line-height:15.5px;color:#141414;letter-spacing:-0.258px;">Plane Wave</div>
<div class="t" style="left:43.30px;top:391.55px;font-size:11.5px;line-height:15.5px;color:#141414;letter-spacing:-0.471px;">Farfield Sources</div>
<div class="t" style="left:43.30px;top:407.55px;font-size:11.5px;line-height:15.5px;color:#141414;letter-spacing:-0.486px;">Field Sources</div>
<div class="t" style="left:43.30px;top:423.55px;font-size:11.5px;line-height:15.5px;color:#141414;letter-spacing:-0.528px;">Ports</div>
<div class="t" style="left:43.30px;top:439.55px;font-size:11.5px;line-height:15.5px;color:#141414;letter-spacing:-0.432px;">Excitation Signals</div>
<div class="t" style="left:43.30px;top:455.55px;font-size:11.5px;line-height:15.5px;color:#141414;letter-spacing:-0.516px;">Field Monitors</div>
<div class="t" style="left:43.30px;top:471.55px;font-size:11.5px;line-height:15.5px;color:#141414;letter-spacing:-0.443px;">Voltage and Current Monitors</div>
<div class="t" style="left:43.30px;top:487.55px;font-size:11.5px;line-height:15.5px;color:#141414;letter-spacing:-0.540px;">Probes</div>
<div class="t" style="left:43.30px;top:503.55px;font-size:11.5px;line-height:15.5px;color:#141414;letter-spacing:-0.531px;">Mesh</div>
<div class="t" style="left:43.30px;top:519.55px;font-size:11.5px;line-height:15.5px;color:#141414;letter-spacing:-0.424px;">1D Results</div>
<div class="t" style="left:43.30px;top:535.55px;font-size:11.5px;line-height:15.5px;color:#141414;letter-spacing:-0.226px;">2D/3D Results</div>
<div class="t" style="left:43.30px;top:551.55px;font-size:11.5px;line-height:15.5px;color:#141414;letter-spacing:-0.567px;">Farfields</div>
<div class="t" style="left:43.30px;top:567.55px;font-size:11.5px;line-height:15.5px;color:#141414;letter-spacing:-0.174px;">Tables</div>
<div class="t" style="left:43.30px;top:583.55px;font-size:11.5px;line-height:15.5px;color:#141414;letter-spacing:-0.457px;">CPU_ic_r1.log</div>
<div class="b" style="left:350.5px;top:158.2px;width:113.5px;height:28px;background:#fff;border:1px solid #dedede;border-bottom:none;box-sizing:border-box;border-radius:3px 3px 0 0;box-shadow:1.5px 0 1px rgba(0,0,0,.12);"></div>
<svg class="b" style="left:350px;top:158px;" width="120" height="30" viewBox="350 158 120 30"><rect x="362" y="163" width="16" height="16" fill="#16868a"/><path d="M364 169.500c2-2 3.500-2 5 0s3.500 2 5 0M364 173c2-2 3.500-2 5 0s3.500 2 5 0M366 176.300c1.500-1.500 3-1.500 4.500 0s2.500 1.500 4 0" fill="none" stroke="#fff" stroke-width="1.100"/><rect x="437.500" y="165.500" width="13" height="13" rx="2" fill="#f4a77a" stroke="#dd6e3c" stroke-width="1.200"/><path d="M441 169l6 6M447 169l-6 6" stroke="#fff" stroke-width="1.800"/></svg>
<div class="t" style="left:382.40px;top:164.75px;font-size:9.5px;line-height:13.5px;color:#333;letter-spacing:0.302px;">Untitled_0*</div>
<div class="b" style="left:350px;top:185px;width:1570px;height:674px;background:#fbfbfb;"></div>
<div class="b" style="left:351px;top:186px;width:1568px;height:672px;background:#8f8f8f;"></div>
<svg class="b" style="left:352px;top:187px;background:linear-gradient(177deg,#a3a8ba 0%,#adb2c2 13%,#c4c7d2 34%,#dadce3 56%,#f0f0f4 77%,#fbfbfc 87%,#ffffff 100%);" width="1566" height="670" viewBox="352 187 1566 670">
<g opacity=".86" fill="none"><path d="M387.7 157.9L349.8 906.4" stroke="#8f9198" stroke-width="1.15"/><path d="M421.3 157.5L384.2 906.1" stroke="#8f9198" stroke-width="1.15"/><path d="M454.9 157.0L418.6 905.8" stroke="#8f9198" stroke-width="1.15"/><path d="M488.5 156.6L453.1 905.5" stroke="#8f9198" stroke-width="1.15"/><path d="M522.2 156.1L487.6 905.2" stroke="#8f9198" stroke-width="1.15"/><path d="M555.8 155.7L522.1 904.9" stroke="#8f9198" stroke-width="1.15"/><path d="M589.5 155.2L556.6 904.6" stroke="#8f9198" stroke-width="1.15"/><path d="M623.2 154.8L591.1 904.3" stroke="#8f9198" stroke-width="1.15"/><path d="M656.9 154.3L625.6 904.0" stroke="#8f9198" stroke-width="1.15"/><path d="M690.6 153.9L660.2 903.7" stroke="#8f9198" stroke-width="1.15"/><path d="M724.3 153.4L694.8 903.5" stroke="#8f9198" stroke-width="1.15"/><path d="M758.1 153.0L729.4 903.2" stroke="#8f9198" stroke-width="1.15"/><path d="M791.8 152.5L764.0 902.9" stroke="#8f9198" stroke-width="1.15"/><path d="M825.6 152.1L798.6 902.6" stroke="#8f9198" stroke-width="1.15"/><path d="M859.4 151.6L833.2 902.3" stroke="#8f9198" stroke-width="1.15"/><path d="M893.2 151.2L867.8 902.0" stroke="#8f9198" stroke-width="1.15"/><path d="M927.0 150.7L902.5 901.7" stroke="#8f9198" stroke-width="1.15"/><path d="M960.8 150.3L937.2 901.4" stroke="#8f9198" stroke-width="1.15"/><path d="M994.7 149.8L971.9 901.1" stroke="#8f9198" stroke-width="1.15"/><path d="M1028.5 149.4L1006.6 900.8" stroke="#8f9198" stroke-width="1.15"/><path d="M1062.4 148.9L1041.3 900.5" stroke="#8f9198" stroke-width="1.15"/><path d="M1096.3 148.5L1076.0 900.2" stroke="#8f9198" stroke-width="1.15"/><path d="M1130.2 148.0L1110.8 899.9" stroke="#8f9198" stroke-width="1.15"/><path d="M1164.1 147.6L1145.5 899.6" stroke="#8f9198" stroke-width="1.15"/><path d="M1198.0 147.1L1180.3 899.3" stroke="#8f9198" stroke-width="1.15"/><path d="M1232.0 146.7L1215.1 899.0" stroke="#8f9198" stroke-width="1.15"/><path d="M1265.9 146.2L1249.9 898.7" stroke="#8f9198" stroke-width="1.15"/><path d="M1299.9 145.8L1284.8 898.4" stroke="#8a8c92" stroke-width="2"/><path d="M1333.9 145.3L1319.6 898.1" stroke="#8f9198" stroke-width="1.15"/><path d="M1367.9 144.9L1354.5 897.8" stroke="#8f9198" stroke-width="1.15"/><path d="M1401.9 144.4L1389.3 897.5" stroke="#8f9198" stroke-width="1.15"/><path d="M1436.0 144.0L1424.2 897.2" stroke="#8f9198" stroke-width="1.15"/><path d="M1470.0 143.5L1459.1 896.9" stroke="#8f9198" stroke-width="1.15"/><path d="M1504.1 143.0L1494.1 896.6" stroke="#8f9198" stroke-width="1.15"/><path d="M1538.1 142.6L1529.0 896.3" stroke="#8f9198" stroke-width="1.15"/><path d="M1572.2 142.1L1564.0 896.0" stroke="#8f9198" stroke-width="1.15"/><path d="M1606.3 141.7L1598.9 895.7" stroke="#8f9198" stroke-width="1.15"/><path d="M1640.5 141.2L1633.9 895.4" stroke="#8f9198" stroke-width="1.15"/><path d="M1674.6 140.8L1668.9 895.1" stroke="#8f9198" stroke-width="1.15"/><path d="M1708.8 140.3L1703.9 894.8" stroke="#8f9198" stroke-width="1.15"/><path d="M1742.9 139.9L1738.9 894.5" stroke="#8f9198" stroke-width="1.15"/><path d="M1777.1 139.4L1774.0 894.2" stroke="#8f9198" stroke-width="1.15"/><path d="M1811.3 138.9L1809.1 893.9" stroke="#8f9198" stroke-width="1.15"/><path d="M1845.5 138.5L1844.1 893.6" stroke="#8f9198" stroke-width="1.15"/><path d="M1879.7 138.0L1879.2 893.3" stroke="#8f9198" stroke-width="1.15"/><path d="M1914.0 137.6L1914.3 893.0" stroke="#8f9198" stroke-width="1.15"/><path d="M1948.2 137.1L1949.5 892.7" stroke="#8f9198" stroke-width="1.15"/><path d="M386.1 188.4L1982.6 167.4" stroke="#8f9198" stroke-width="1.15"/><path d="M384.6 218.9L1982.7 198.2" stroke="#8f9198" stroke-width="1.15"/><path d="M383.1 249.5L1982.8 229.1" stroke="#8f9198" stroke-width="1.15"/><path d="M381.5 280.1L1982.8 260.0" stroke="#8f9198" stroke-width="1.15"/><path d="M379.9 310.8L1982.9 291.0" stroke="#8f9198" stroke-width="1.15"/><path d="M378.4 341.6L1983.0 322.1" stroke="#8f9198" stroke-width="1.15"/><path d="M376.8 372.4L1983.1 353.2" stroke="#8f9198" stroke-width="1.15"/><path d="M375.3 403.3L1983.2 384.4" stroke="#8f9198" stroke-width="1.15"/><path d="M373.7 434.3L1983.3 415.6" stroke="#8f9198" stroke-width="1.15"/><path d="M372.1 465.3L1983.4 447.0" stroke="#8f9198" stroke-width="1.15"/><path d="M370.5 496.4L1983.4 478.4" stroke="#8f9198" stroke-width="1.15"/><path d="M369.0 527.5L1983.5 509.8" stroke="#8a8c92" stroke-width="2"/><path d="M367.4 558.7L1983.6 541.3" stroke="#8f9198" stroke-width="1.15"/><path d="M365.8 590.0L1983.7 572.9" stroke="#8f9198" stroke-width="1.15"/><path d="M364.2 621.4L1983.8 604.6" stroke="#8f9198" stroke-width="1.15"/><path d="M362.6 652.8L1983.9 636.3" stroke="#8f9198" stroke-width="1.15"/><path d="M361.0 684.2L1984.0 668.1" stroke="#8f9198" stroke-width="1.15"/><path d="M359.4 715.8L1984.1 699.9" stroke="#8f9198" stroke-width="1.15"/><path d="M357.8 747.4L1984.1 731.8" stroke="#8f9198" stroke-width="1.15"/><path d="M356.2 779.1L1984.2 763.8" stroke="#8f9198" stroke-width="1.15"/><path d="M354.6 810.8L1984.3 795.9" stroke="#8f9198" stroke-width="1.15"/><path d="M353.0 842.6L1984.4 828.0" stroke="#8f9198" stroke-width="1.15"/><path d="M351.4 874.5L1984.5 860.2" stroke="#8f9198" stroke-width="1.15"/></g>
<g shape-rendering="crispEdges"><path d="M831.5 225.2L1409.5 217.5L1401.0 750.8L811.7 757.2Z" fill="#529360"/><path d="M843.4 237.7L1397.7 230.4L1389.4 740.6L824.7 746.8Z" fill="#4aaf42" stroke="#15110d" stroke-width="1.2"/><path d="M854.3 246.6L1383.1 239.6L1374.8 728.8L836.6 734.7Z" fill="#7f57c3" stroke="#15110d" stroke-width="1.2"/><path d="M1240.8 332.3L1247.3 332.7L1253.7 334.0L1259.7 336.2L1265.3 339.2L1270.2 343.0L1274.3 347.5L1277.7 352.6L1280.1 358.0L1281.5 363.8L1281.9 369.8L1277.2 597.1L1276.6 603.1L1274.9 609.1L1272.2 614.7L1268.7 619.9L1264.3 624.6L1259.1 628.6L1253.4 631.9L1247.2 634.3L1240.7 635.8L1234.1 636.3L983.8 639.2L977.2 638.8L970.8 637.4L964.8 635.2L959.3 632.0L954.4 628.2L950.2 623.6L946.9 618.4L944.6 612.9L943.2 607.0L942.9 600.9L950.3 373.9L951.0 368.0L952.7 362.2L955.4 356.6L959.0 351.5L963.4 346.9L968.5 343.0L974.2 339.8L980.3 337.5L986.7 336.0L993.3 335.5Z M1240.5 344.7L1244.9 344.9L1249.2 345.8L1253.3 347.3L1257.0 349.4L1260.3 351.9L1263.1 354.9L1265.4 358.3L1267.0 362.0L1267.9 365.9L1268.2 369.9L1263.4 597.2L1263.0 601.3L1261.9 605.3L1260.1 609.1L1257.7 612.6L1254.7 615.8L1251.2 618.5L1247.4 620.7L1243.2 622.3L1238.9 623.3L1234.4 623.6L984.2 626.5L979.8 626.2L975.5 625.3L971.4 623.8L967.7 621.7L964.4 619.1L961.6 616.0L959.4 612.6L957.8 608.8L956.9 604.9L956.6 600.8L963.9 373.8L964.4 369.8L965.6 365.8L967.4 362.1L969.8 358.7L972.8 355.6L976.2 352.9L980.0 350.8L984.2 349.2L988.5 348.2L992.9 347.8Z" fill="#e0d01c" fill-rule="evenodd" stroke="#15110d" stroke-width="1.2"/><path d="M1231.9 353.0L1236.1 353.2L1240.2 354.1L1244.0 355.5L1247.6 357.4L1250.7 359.8L1253.4 362.7L1255.5 365.9L1257.0 369.4L1257.9 373.1L1258.2 376.9L1253.6 589.6L1253.2 593.4L1252.1 597.2L1250.4 600.8L1248.1 604.1L1245.3 607.1L1242.1 609.7L1238.4 611.8L1234.4 613.3L1230.3 614.2L1226.1 614.6L992.1 617.3L987.9 617.0L983.8 616.2L980.0 614.7L976.4 612.7L973.3 610.3L970.6 607.4L968.5 604.1L967.0 600.5L966.2 596.8L966.0 592.9L972.7 380.5L973.2 376.7L974.3 373.0L976.0 369.5L978.3 366.2L981.1 363.3L984.4 360.7L988.0 358.7L991.9 357.2L996.0 356.3L1000.2 355.9Z M1231.7 365.4L1233.7 365.5L1235.7 365.9L1237.6 366.6L1239.3 367.5L1240.8 368.7L1242.1 370.1L1243.2 371.7L1243.9 373.4L1244.4 375.2L1244.5 377.1L1239.8 589.7L1239.6 591.6L1239.1 593.5L1238.3 595.2L1237.2 596.9L1235.8 598.3L1234.2 599.6L1232.4 600.6L1230.5 601.3L1228.4 601.8L1226.4 602.0L992.5 604.7L990.5 604.5L988.5 604.1L986.6 603.4L984.8 602.4L983.3 601.2L982.0 599.8L981.0 598.2L980.2 596.5L979.8 594.6L979.7 592.7L986.4 380.4L986.6 378.5L987.1 376.7L988.0 374.9L989.1 373.3L990.5 371.9L992.1 370.7L993.8 369.7L995.7 368.9L997.8 368.5L999.8 368.3Z" fill="#e0d01c" fill-rule="evenodd" stroke="#15110d" stroke-width="1.2"/><path d="M848.5 248.0L868.5 268.5" stroke="#15110d" stroke-width="11.5" stroke-linecap="round"/><path d="M848.5 248.0L868.5 268.5" stroke="#e0d01c" stroke-width="9.5" stroke-linecap="round"/><path d="M858.5 240.5L880.0 260.5" stroke="#15110d" stroke-width="11.5" stroke-linecap="round"/><path d="M858.5 240.5L880.0 260.5" stroke="#e0d01c" stroke-width="9.5" stroke-linecap="round"/><path d="M901.5 235.7L900.5 263.7L944.6 304.3L990.0 303.7L1004.6 317.2L1004.4 323.5 M908.5 235.7L907.6 260.4L948.2 297.7L989.5 297.2L1009.9 316.0L1009.7 323.4 M917.2 235.5L916.5 257.1L953.4 291.2L989.1 290.7L1015.3 314.7L1015.0 323.3 M925.0 235.4L924.4 253.9L957.8 284.6L988.7 284.2L1020.3 313.3L1020.0 323.3 M933.0 235.3L932.5 250.6L962.3 278.1L988.3 277.7L1025.5 311.9L1025.2 323.2 M940.8 235.2L940.4 247.4L966.6 271.5L987.9 271.2L1030.9 310.7L1030.5 323.1 M949.5 235.1L949.1 246.6L969.1 265.0L987.5 264.8L1036.2 309.5L1035.8 323.1 M981.8 234.7L981.1 256.3L983.4 258.3L987.1 258.3L1040.7 307.5L1040.2 323.0 M989.6 234.6L989.0 253.0L1045.9 305.3L1045.4 323.0 M1006.2 234.4L1005.4 261.9L1051.2 304.0L1050.7 322.9 M1016.6 234.2L1015.9 258.6L1057.5 296.9L1056.8 322.8 M1035.0 234.0L1034.2 262.2L1063.0 288.6L1062.0 322.7 M1070.0 233.5L1069.2 262.7L1073.4 266.6L1071.8 322.6 M1078.0 233.4L1077.3 259.5L1078.7 260.8L1077.0 322.5 M1085.8 233.3L1085.5 244.8L1084.4 245.7L1082.3 322.5 M1093.6 233.2L1093.3 244.7L1089.6 248.0L1087.5 322.4 M1101.0 233.1L1100.6 246.2L1094.6 251.6L1092.7 322.3 M1109.0 233.0L1108.6 249.2L1099.8 257.1L1098.0 322.3 M1117.0 232.9L1116.5 252.3L1104.8 262.8L1103.2 322.2 M1147.7 232.5L1147.4 244.0L1132.3 257.6L1130.6 321.9 M1154.7 232.4L1154.4 243.9L1137.1 259.4L1135.5 321.8 M1161.6 232.3L1161.3 243.8L1142.3 260.9L1140.7 321.7 M1168.6 232.2L1168.3 243.7L1147.5 262.4L1146.0 321.7 M1175.6 232.1L1175.3 243.5L1152.5 269.5L1151.2 321.6 M1188.7 231.9L1188.4 243.0L1178.4 252.1L1178.4 252.1L1163.0 265.9L1161.6 321.5 M1194.8 231.9L1194.5 243.4L1168.2 267.0L1166.9 321.4 M1201.8 231.8L1201.5 243.3L1179.6 263.0L1178.2 321.2 M1208.7 231.7L1208.4 244.9L1184.7 266.1L1183.4 321.2 M1217.5 231.6L1217.1 247.9L1189.9 272.4L1188.7 321.1 M1225.3 231.5L1224.9 250.9L1194.9 277.9L1193.9 321.0 M1251.5 231.1L1250.9 260.8L1199.4 307.1L1199.1 321.0 M1258.4 231.0L1257.7 263.8L1253.3 267.8L1249.8 267.8L1204.7 308.4L1204.4 320.9 M1266.3 230.9L1265.5 266.9L1257.4 274.2L1249.1 274.3L1209.9 309.6L1209.6 320.8 M1286.4 230.6L1285.7 262.8L1266.0 280.6L1248.3 280.8L1215.0 310.8L1214.8 320.8 M1320.4 230.2L1319.8 259.5L1289.6 286.8L1247.6 287.3L1220.2 312.0L1220.0 320.7 M1351.3 229.8L1350.9 251.4L1304.7 293.1L1246.8 293.9L1225.5 313.1L1225.3 320.6 M1366.3 229.6L1365.8 260.7L1322.9 299.4L1246.0 300.4L1230.6 314.3L1230.5 320.6 M1395.6 290.0L1367.9 290.4L1318.0 335.4L1317.6 360.0L1302.2 373.9L1295.2 374.0 M1395.4 297.0L1371.2 297.3L1325.2 339.0L1324.8 359.3L1302.8 379.2L1295.1 379.3 M1395.3 304.8L1374.6 305.1L1332.3 343.3L1332.0 358.7L1303.4 384.6L1295.0 384.7 M1395.2 311.0L1378.0 311.2L1339.5 346.1L1339.2 358.0L1304.0 389.9L1294.9 390.0 M1394.0 382.8L1359.3 383.2L1346.7 394.7L1294.8 395.3 M1394.0 387.2L1362.7 387.6L1349.1 400.0L1294.6 400.7 M1393.7 401.2L1369.4 401.5L1365.4 405.1L1294.5 406.0 M1393.4 422.0L1377.9 422.2L1365.0 410.4L1294.4 411.3 M1393.3 429.0L1374.3 429.2L1359.6 415.8L1294.3 416.6 M1393.2 435.2L1370.7 435.5L1355.0 421.2L1294.2 422.0 M1393.0 448.3L1378.2 448.5L1354.2 426.6L1294.1 427.3 M1392.9 455.2L1374.6 455.4L1348.9 432.0L1294.0 432.6 M1392.7 462.2L1370.9 462.5L1343.4 437.4L1293.9 438.0 M1392.6 469.2L1367.3 469.5L1352.9 456.4L1352.9 456.4L1338.0 442.7L1293.8 443.3 M1392.3 486.6L1379.5 486.8L1337.1 448.1L1293.7 448.6 M1392.2 494.5L1380.3 494.6L1367.4 482.9L1367.4 482.9L1352.4 469.2L1293.3 469.9 M1392.1 499.7L1379.2 499.9L1351.6 474.6L1293.1 475.3 M1392.0 508.4L1376.8 508.6L1345.5 480.0L1293.0 480.6 M1391.9 514.5L1373.2 514.7L1368.8 510.7L1368.8 510.7L1341.1 485.3L1292.9 485.9 M1391.7 527.6L1380.7 527.7L1361.5 510.2L1361.5 510.2L1340.2 490.7L1292.8 491.3 M1391.6 532.9L1379.7 533.0L1354.3 509.7L1354.3 509.7L1339.3 496.0L1292.7 496.6 M1391.5 538.0L1378.6 538.2L1338.4 501.4L1292.6 501.9 M1391.4 543.3L1376.9 543.5L1342.5 512.0L1292.4 512.6 M1391.3 548.5L1373.3 548.7L1344.8 522.6L1292.2 523.2 M1391.2 553.7L1369.6 554.0L1341.3 528.0L1292.1 528.6 M1391.0 570.3L1378.1 570.5L1337.6 533.4L1292.0 533.9 M1390.8 577.3L1377.9 577.5L1335.7 538.7L1291.9 539.2 M1390.7 584.2L1377.8 584.4L1333.9 544.1L1291.8 544.6 M1390.6 591.2L1377.7 591.3L1332.0 549.4L1291.7 549.9 M1390.5 597.3L1374.5 597.5L1328.0 554.8L1291.5 555.2 M1390.4 605.2L1370.9 605.4L1321.6 560.2L1291.4 560.6 M1389.6 653.0L1365.9 653.3L1334.3 624.2L1334.8 597.0L1300.8 565.8L1291.3 565.9 M1389.5 658.0L1362.3 658.3L1327.0 625.8L1327.6 596.6L1299.9 571.1L1291.2 571.2 M1388.8 702.0L1366.7 702.2L1319.1 658.4L1320.3 596.1L1299.0 576.4L1291.1 576.5 M1388.7 709.0L1363.0 709.3L1311.8 662.0L1313.0 595.6L1298.1 581.8L1291.0 581.9 M880.0 744.5L880.8 721.5L935.0 672.6L979.0 672.1L994.7 657.9L994.9 651.4 M887.0 744.5L887.7 724.7L938.0 679.2L978.2 678.8L999.9 659.1L1000.1 651.4 M904.5 744.3L905.5 714.6L937.2 685.9L977.3 685.5L1005.4 660.0L1005.7 651.3 M911.3 744.2L912.2 717.7L940.0 692.6L976.5 692.2L1010.6 661.3L1010.9 651.2 M919.0 744.1L919.8 720.9L943.8 699.2L975.7 698.9L1015.9 662.5L1016.2 651.2 M941.8 743.9L942.8 714.5L952.4 705.8L974.8 705.6L1021.0 663.8L1021.4 651.1 M948.8 743.8L949.6 717.7L955.4 712.5L974.0 712.3L1026.8 664.5L1027.2 651.0 M980.0 743.4L980.7 721.1L1032.0 665.7L1032.4 651.0 M987.0 743.4L987.6 724.3L1036.8 679.7L1037.6 650.9 M994.5 743.3L995.0 727.4L1042.7 684.1L1043.7 650.9 M1001.5 743.2L1001.9 730.6L1047.9 688.9L1049.0 650.8 M1043.7 742.7L1044.5 715.2L1052.6 707.8L1054.2 650.7 M1051.6 742.7L1052.3 718.3L1063.9 707.8L1065.5 650.6 M1059.4 742.6L1060.0 721.5L1069.0 713.3L1070.8 650.6 M1066.4 742.5L1066.9 724.7L1080.4 712.4L1082.1 650.4 M1078.6 742.4L1079.1 722.7L1085.5 716.9L1087.3 650.4 M1085.6 742.3L1086.0 725.9L1090.7 721.7L1092.6 650.3 M1092.6 742.2L1093.0 729.1L1118.1 706.2L1119.6 650.0 M1099.5 742.1L1099.8 730.2L1123.3 708.9L1124.8 649.9 M1107.4 742.0L1107.7 730.1L1128.4 711.3L1130.0 649.9 M1114.4 742.0L1114.7 730.0L1133.7 712.8L1135.3 649.8 M1121.3 741.9L1121.6 730.0L1139.8 713.4L1141.4 649.8 M1132.7 741.8L1133.0 729.8L1144.9 719.1L1146.6 649.7 M1139.7 741.7L1140.0 729.8L1156.4 714.9L1158.0 649.6 M1146.6 741.6L1146.9 729.7L1161.6 716.3L1163.2 649.5 M1156.2 741.5L1156.5 729.6L1166.7 720.3L1168.4 649.4 M1192.5 741.1L1192.8 729.2L1172.2 710.1L1173.7 649.4 M1200.0 741.0L1200.3 729.1L1177.5 707.9L1178.9 649.3 M1207.4 741.0L1207.7 729.0L1182.7 705.9L1184.1 649.3 M1216.0 740.9L1216.3 728.9L1188.9 703.5L1190.2 649.2 M1224.5 740.8L1224.8 727.3L1194.3 699.0L1195.5 649.1 M1232.0 740.7L1232.4 723.9L1199.7 693.6L1200.7 649.1 M1239.4 740.6L1239.8 720.6L1205.1 688.4L1206.0 649.0 M1267.0 740.3L1267.4 719.1L1210.8 666.6L1211.2 649.0 M1275.6 740.2L1276.1 715.7L1216.1 660.2L1216.4 648.9 M1309.8 739.8L1310.5 702.9L1280.7 675.4L1242.2 675.8L1221.4 656.6L1221.6 648.8 M1334.3 739.6L1334.9 706.3L1294.0 668.5L1241.7 669.1L1226.8 655.3L1226.9 648.8 M840.6 321.3L877.5 320.8L915.8 356.3L915.4 369.6L930.0 383.1L937.0 383.0 M840.4 328.0L873.8 327.6L908.5 359.7L908.2 369.1L929.0 388.3L936.8 388.2 M839.8 345.4L863.8 345.1L916.2 393.7L936.6 393.4 M839.6 351.0L860.1 350.7L912.1 398.9L936.4 398.6 M839.1 363.7L867.0 363.3L911.0 404.1L936.3 403.8 M838.8 371.5L863.3 371.2L904.5 409.4L936.1 409.0 M838.6 376.8L859.6 376.5L900.7 414.6L935.9 414.2 M838.4 382.9L855.9 382.7L896.0 419.9L935.8 419.4 M838.2 389.0L852.2 388.8L891.3 425.1L935.6 424.6 M837.0 419.5L878.0 419.0L892.2 432.2L935.3 431.7 M836.8 427.0L874.2 426.5L886.1 437.6L935.2 437.0 M836.5 435.2L870.4 434.8L881.1 444.7L934.9 444.0 M836.2 441.3L866.7 440.9L876.2 449.7L934.8 449.0 M835.6 458.7L873.7 458.2L877.2 455.1L934.6 454.4 M835.3 466.6L876.9 466.1L883.5 460.2L934.4 459.6 M835.0 474.4L880.1 473.9L889.6 465.3L934.2 464.8 M833.4 517.2L844.4 517.1L869.7 494.3L869.7 494.3L885.4 480.3L933.8 479.7 M833.3 521.5L846.1 521.3L886.1 485.5L933.6 484.9 M833.0 530.2L848.5 530.0L892.5 490.6L933.4 490.1 M832.7 536.3L851.8 536.1L896.8 495.7L933.2 495.3 M832.5 543.3L855.1 543.0L870.4 529.2L932.1 528.5 M832.3 549.4L858.4 549.1L874.8 534.4L932.0 533.7 M832.1 553.5L861.7 553.2L865.5 549.8L931.5 549.0 M828.9 641.0L858.3 640.7L862.8 636.6L864.0 603.3L918.6 554.1L931.3 554.0 M828.3 658.4L855.1 658.1L869.8 644.9L871.2 602.7L919.4 559.3L931.1 559.2 M828.0 664.5L858.4 664.2L876.9 647.5L878.5 602.0L920.2 564.5L930.9 564.4 M826.9 695.0L856.0 694.7L883.4 670.0L885.8 601.4L920.9 569.7L930.8 569.6 M826.6 704.6L859.2 704.2L890.4 676.0L893.0 600.7L921.7 574.9L930.6 574.8 M826.3 711.6L862.5 711.2L897.6 679.5L900.3 600.1L922.5 580.1L930.4 580.0 M826.0 718.5L865.7 718.1L904.7 682.9L907.6 599.4L923.2 585.3L930.3 585.2" fill="none" stroke="#15110d" stroke-width="4.0" stroke-linejoin="round" stroke-linecap="round"/><path d="M901.5 235.7L900.5 263.7L944.6 304.3L990.0 303.7L1004.6 317.2L1004.4 323.5 M908.5 235.7L907.6 260.4L948.2 297.7L989.5 297.2L1009.9 316.0L1009.7 323.4 M917.2 235.5L916.5 257.1L953.4 291.2L989.1 290.7L1015.3 314.7L1015.0 323.3 M925.0 235.4L924.4 253.9L957.8 284.6L988.7 284.2L1020.3 313.3L1020.0 323.3 M933.0 235.3L932.5 250.6L962.3 278.1L988.3 277.7L1025.5 311.9L1025.2 323.2 M940.8 235.2L940.4 247.4L966.6 271.5L987.9 271.2L1030.9 310.7L1030.5 323.1 M949.5 235.1L949.1 246.6L969.1 265.0L987.5 264.8L1036.2 309.5L1035.8 323.1 M981.8 234.7L981.1 256.3L983.4 258.3L987.1 258.3L1040.7 307.5L1040.2 323.0 M989.6 234.6L989.0 253.0L1045.9 305.3L1045.4 323.0 M1006.2 234.4L1005.4 261.9L1051.2 304.0L1050.7 322.9 M1016.6 234.2L1015.9 258.6L1057.5 296.9L1056.8 322.8 M1035.0 234.0L1034.2 262.2L1063.0 288.6L1062.0 322.7 M1070.0 233.5L1069.2 262.7L1073.4 266.6L1071.8 322.6 M1078.0 233.4L1077.3 259.5L1078.7 260.8L1077.0 322.5 M1085.8 233.3L1085.5 244.8L1084.4 245.7L1082.3 322.5 M1093.6 233.2L1093.3 244.7L1089.6 248.0L1087.5 322.4 M1101.0 233.1L1100.6 246.2L1094.6 251.6L1092.7 322.3 M1109.0 233.0L1108.6 249.2L1099.8 257.1L1098.0 322.3 M1117.0 232.9L1116.5 252.3L1104.8 262.8L1103.2 322.2 M1147.7 232.5L1147.4 244.0L1132.3 257.6L1130.6 321.9 M1154.7 232.4L1154.4 243.9L1137.1 259.4L1135.5 321.8 M1161.6 232.3L1161.3 243.8L1142.3 260.9L1140.7 321.7 M1168.6 232.2L1168.3 243.7L1147.5 262.4L1146.0 321.7 M1175.6 232.1L1175.3 243.5L1152.5 269.5L1151.2 321.6 M1188.7 231.9L1188.4 243.0L1178.4 252.1L1178.4 252.1L1163.0 265.9L1161.6 321.5 M1194.8 231.9L1194.5 243.4L1168.2 267.0L1166.9 321.4 M1201.8 231.8L1201.5 243.3L1179.6 263.0L1178.2 321.2 M1208.7 231.7L1208.4 244.9L1184.7 266.1L1183.4 321.2 M1217.5 231.6L1217.1 247.9L1189.9 272.4L1188.7 321.1 M1225.3 231.5L1224.9 250.9L1194.9 277.9L1193.9 321.0 M1251.5 231.1L1250.9 260.8L1199.4 307.1L1199.1 321.0 M1258.4 231.0L1257.7 263.8L1253.3 267.8L1249.8 267.8L1204.7 308.4L1204.4 320.9 M1266.3 230.9L1265.5 266.9L1257.4 274.2L1249.1 274.3L1209.9 309.6L1209.6 320.8 M1286.4 230.6L1285.7 262.8L1266.0 280.6L1248.3 280.8L1215.0 310.8L1214.8 320.8 M1320.4 230.2L1319.8 259.5L1289.6 286.8L1247.6 287.3L1220.2 312.0L1220.0 320.7 M1351.3 229.8L1350.9 251.4L1304.7 293.1L1246.8 293.9L1225.5 313.1L1225.3 320.6 M1366.3 229.6L1365.8 260.7L1322.9 299.4L1246.0 300.4L1230.6 314.3L1230.5 320.6 M1395.6 290.0L1367.9 290.4L1318.0 335.4L1317.6 360.0L1302.2 373.9L1295.2 374.0 M1395.4 297.0L1371.2 297.3L1325.2 339.0L1324.8 359.3L1302.8 379.2L1295.1 379.3 M1395.3 304.8L1374.6 305.1L1332.3 343.3L1332.0 358.7L1303.4 384.6L1295.0 384.7 M1395.2 311.0L1378.0 311.2L1339.5 346.1L1339.2 358.0L1304.0 389.9L1294.9 390.0 M1394.0 382.8L1359.3 383.2L1346.7 394.7L1294.8 395.3 M1394.0 387.2L1362.7 387.6L1349.1 400.0L1294.6 400.7 M1393.7 401.2L1369.4 401.5L1365.4 405.1L1294.5 406.0 M1393.4 422.0L1377.9 422.2L1365.0 410.4L1294.4 411.3 M1393.3 429.0L1374.3 429.2L1359.6 415.8L1294.3 416.6 M1393.2 435.2L1370.7 435.5L1355.0 421.2L1294.2 422.0 M1393.0 448.3L1378.2 448.5L1354.2 426.6L1294.1 427.3 M1392.9 455.2L1374.6 455.4L1348.9 432.0L1294.0 432.6 M1392.7 462.2L1370.9 462.5L1343.4 437.4L1293.9 438.0 M1392.6 469.2L1367.3 469.5L1352.9 456.4L1352.9 456.4L1338.0 442.7L1293.8 443.3 M1392.3 486.6L1379.5 486.8L1337.1 448.1L1293.7 448.6 M1392.2 494.5L1380.3 494.6L1367.4 482.9L1367.4 482.9L1352.4 469.2L1293.3 469.9 M1392.1 499.7L1379.2 499.9L1351.6 474.6L1293.1 475.3 M1392.0 508.4L1376.8 508.6L1345.5 480.0L1293.0 480.6 M1391.9 514.5L1373.2 514.7L1368.8 510.7L1368.8 510.7L1341.1 485.3L1292.9 485.9 M1391.7 527.6L1380.7 527.7L1361.5 510.2L1361.5 510.2L1340.2 490.7L1292.8 491.3 M1391.6 532.9L1379.7 533.0L1354.3 509.7L1354.3 509.7L1339.3 496.0L1292.7 496.6 M1391.5 538.0L1378.6 538.2L1338.4 501.4L1292.6 501.9 M1391.4 543.3L1376.9 543.5L1342.5 512.0L1292.4 512.6 M1391.3 548.5L1373.3 548.7L1344.8 522.6L1292.2 523.2 M1391.2 553.7L1369.6 554.0L1341.3 528.0L1292.1 528.6 M1391.0 570.3L1378.1 570.5L1337.6 533.4L1292.0 533.9 M1390.8 577.3L1377.9 577.5L1335.7 538.7L1291.9 539.2 M1390.7 584.2L1377.8 584.4L1333.9 544.1L1291.8 544.6 M1390.6 591.2L1377.7 591.3L1332.0 549.4L1291.7 549.9 M1390.5 597.3L1374.5 597.5L1328.0 554.8L1291.5 555.2 M1390.4 605.2L1370.9 605.4L1321.6 560.2L1291.4 560.6 M1389.6 653.0L1365.9 653.3L1334.3 624.2L1334.8 597.0L1300.8 565.8L1291.3 565.9 M1389.5 658.0L1362.3 658.3L1327.0 625.8L1327.6 596.6L1299.9 571.1L1291.2 571.2 M1388.8 702.0L1366.7 702.2L1319.1 658.4L1320.3 596.1L1299.0 576.4L1291.1 576.5 M1388.7 709.0L1363.0 709.3L1311.8 662.0L1313.0 595.6L1298.1 581.8L1291.0 581.9 M880.0 744.5L880.8 721.5L935.0 672.6L979.0 672.1L994.7 657.9L994.9 651.4 M887.0 744.5L887.7 724.7L938.0 679.2L978.2 678.8L999.9 659.1L1000.1 651.4 M904.5 744.3L905.5 714.6L937.2 685.9L977.3 685.5L1005.4 660.0L1005.7 651.3 M911.3 744.2L912.2 717.7L940.0 692.6L976.5 692.2L1010.6 661.3L1010.9 651.2 M919.0 744.1L919.8 720.9L943.8 699.2L975.7 698.9L1015.9 662.5L1016.2 651.2 M941.8 743.9L942.8 714.5L952.4 705.8L974.8 705.6L1021.0 663.8L1021.4 651.1 M948.8 743.8L949.6 717.7L955.4 712.5L974.0 712.3L1026.8 664.5L1027.2 651.0 M980.0 743.4L980.7 721.1L1032.0 665.7L1032.4 651.0 M987.0 743.4L987.6 724.3L1036.8 679.7L1037.6 650.9 M994.5 743.3L995.0 727.4L1042.7 684.1L1043.7 650.9 M1001.5 743.2L1001.9 730.6L1047.9 688.9L1049.0 650.8 M1043.7 742.7L1044.5 715.2L1052.6 707.8L1054.2 650.7 M1051.6 742.7L1052.3 718.3L1063.9 707.8L1065.5 650.6 M1059.4 742.6L1060.0 721.5L1069.0 713.3L1070.8 650.6 M1066.4 742.5L1066.9 724.7L1080.4 712.4L1082.1 650.4 M1078.6 742.4L1079.1 722.7L1085.5 716.9L1087.3 650.4 M1085.6 742.3L1086.0 725.9L1090.7 721.7L1092.6 650.3 M1092.6 742.2L1093.0 729.1L1118.1 706.2L1119.6 650.0 M1099.5 742.1L1099.8 730.2L1123.3 708.9L1124.8 649.9 M1107.4 742.0L1107.7 730.1L1128.4 711.3L1130.0 649.9 M1114.4 742.0L1114.7 730.0L1133.7 712.8L1135.3 649.8 M1121.3 741.9L1121.6 730.0L1139.8 713.4L1141.4 649.8 M1132.7 741.8L1133.0 729.8L1144.9 719.1L1146.6 649.7 M1139.7 741.7L1140.0 729.8L1156.4 714.9L1158.0 649.6 M1146.6 741.6L1146.9 729.7L1161.6 716.3L1163.2 649.5 M1156.2 741.5L1156.5 729.6L1166.7 720.3L1168.4 649.4 M1192.5 741.1L1192.8 729.2L1172.2 710.1L1173.7 649.4 M1200.0 741.0L1200.3 729.1L1177.5 707.9L1178.9 649.3 M1207.4 741.0L1207.7 729.0L1182.7 705.9L1184.1 649.3 M1216.0 740.9L1216.3 728.9L1188.9 703.5L1190.2 649.2 M1224.5 740.8L1224.8 727.3L1194.3 699.0L1195.5 649.1 M1232.0 740.7L1232.4 723.9L1199.7 693.6L1200.7 649.1 M1239.4 740.6L1239.8 720.6L1205.1 688.4L1206.0 649.0 M1267.0 740.3L1267.4 719.1L1210.8 666.6L1211.2 649.0 M1275.6 740.2L1276.1 715.7L1216.1 660.2L1216.4 648.9 M1309.8 739.8L1310.5 702.9L1280.7 675.4L1242.2 675.8L1221.4 656.6L1221.6 648.8 M1334.3 739.6L1334.9 706.3L1294.0 668.5L1241.7 669.1L1226.8 655.3L1226.9 648.8 M840.6 321.3L877.5 320.8L915.8 356.3L915.4 369.6L930.0 383.1L937.0 383.0 M840.4 328.0L873.8 327.6L908.5 359.7L908.2 369.1L929.0 388.3L936.8 388.2 M839.8 345.4L863.8 345.1L916.2 393.7L936.6 393.4 M839.6 351.0L860.1 350.7L912.1 398.9L936.4 398.6 M839.1 363.7L867.0 363.3L911.0 404.1L936.3 403.8 M838.8 371.5L863.3 371.2L904.5 409.4L936.1 409.0 M838.6 376.8L859.6 376.5L900.7 414.6L935.9 414.2 M838.4 382.9L855.9 382.7L896.0 419.9L935.8 419.4 M838.2 389.0L852.2 388.8L891.3 425.1L935.6 424.6 M837.0 419.5L878.0 419.0L892.2 432.2L935.3 431.7 M836.8 427.0L874.2 426.5L886.1 437.6L935.2 437.0 M836.5 435.2L870.4 434.8L881.1 444.7L934.9 444.0 M836.2 441.3L866.7 440.9L876.2 449.7L934.8 449.0 M835.6 458.7L873.7 458.2L877.2 455.1L934.6 454.4 M835.3 466.6L876.9 466.1L883.5 460.2L934.4 459.6 M835.0 474.4L880.1 473.9L889.6 465.3L934.2 464.8 M833.4 517.2L844.4 517.1L869.7 494.3L869.7 494.3L885.4 480.3L933.8 479.7 M833.3 521.5L846.1 521.3L886.1 485.5L933.6 484.9 M833.0 530.2L848.5 530.0L892.5 490.6L933.4 490.1 M832.7 536.3L851.8 536.1L896.8 495.7L933.2 495.3 M832.5 543.3L855.1 543.0L870.4 529.2L932.1 528.5 M832.3 549.4L858.4 549.1L874.8 534.4L932.0 533.7 M832.1 553.5L861.7 553.2L865.5 549.8L931.5 549.0 M828.9 641.0L858.3 640.7L862.8 636.6L864.0 603.3L918.6 554.1L931.3 554.0 M828.3 658.4L855.1 658.1L869.8 644.9L871.2 602.7L919.4 559.3L931.1 559.2 M828.0 664.5L858.4 664.2L876.9 647.5L878.5 602.0L920.2 564.5L930.9 564.4 M826.9 695.0L856.0 694.7L883.4 670.0L885.8 601.4L920.9 569.7L930.8 569.6 M826.6 704.6L859.2 704.2L890.4 676.0L893.0 600.7L921.7 574.9L930.6 574.8 M826.3 711.6L862.5 711.2L897.6 679.5L900.3 600.1L922.5 580.1L930.4 580.0 M826.0 718.5L865.7 718.1L904.7 682.9L907.6 599.4L923.2 585.3L930.3 585.2" fill="none" stroke="#e0d01c" stroke-width="2.1" stroke-linejoin="round" stroke-linecap="butt"/><circle cx="917.2" cy="241.0" r="3.2" fill="#e0d01c" stroke="#15110d" stroke-width="1.2"/><circle cx="917.2" cy="241.0" r="1.5" fill="#e8702a" stroke="#7a2a10" stroke-width=".6"/><circle cx="914.2" cy="270.5" r="3.2" fill="#e0d01c" stroke="#15110d" stroke-width="1.2"/><circle cx="914.2" cy="270.5" r="1.5" fill="#e8702a" stroke="#7a2a10" stroke-width=".6"/><circle cx="948.3" cy="301.0" r="3.2" fill="#e0d01c" stroke="#15110d" stroke-width="1.2"/><circle cx="948.3" cy="301.0" r="1.5" fill="#e8702a" stroke="#7a2a10" stroke-width=".6"/><circle cx="925.5" cy="332.0" r="3.2" fill="#e0d01c" stroke="#15110d" stroke-width="1.2"/><circle cx="925.5" cy="332.0" r="1.5" fill="#e8702a" stroke="#7a2a10" stroke-width=".6"/><circle cx="947.0" cy="333.0" r="3.2" fill="#e0d01c" stroke="#15110d" stroke-width="1.2"/><circle cx="947.0" cy="333.0" r="1.5" fill="#e8702a" stroke="#7a2a10" stroke-width=".6"/><circle cx="865.5" cy="339.0" r="3.2" fill="#e0d01c" stroke="#15110d" stroke-width="1.2"/><circle cx="865.5" cy="339.0" r="1.5" fill="#e8702a" stroke="#7a2a10" stroke-width=".6"/><circle cx="910.5" cy="362.5" r="3.2" fill="#e0d01c" stroke="#15110d" stroke-width="1.2"/><circle cx="910.5" cy="362.5" r="1.5" fill="#e8702a" stroke="#7a2a10" stroke-width=".6"/><circle cx="896.0" cy="364.0" r="3.2" fill="#e0d01c" stroke="#15110d" stroke-width="1.2"/><circle cx="896.0" cy="364.0" r="1.5" fill="#e8702a" stroke="#7a2a10" stroke-width=".6"/><circle cx="880.0" cy="334.0" r="3.2" fill="#e0d01c" stroke="#15110d" stroke-width="1.2"/><circle cx="880.0" cy="334.0" r="1.5" fill="#e8702a" stroke="#7a2a10" stroke-width=".6"/><circle cx="1286.5" cy="236.5" r="3.2" fill="#e0d01c" stroke="#15110d" stroke-width="1.2"/><circle cx="1286.5" cy="236.5" r="1.5" fill="#e8702a" stroke="#7a2a10" stroke-width=".6"/><circle cx="1320.8" cy="236.5" r="3.2" fill="#e0d01c" stroke="#15110d" stroke-width="1.2"/><circle cx="1320.8" cy="236.5" r="1.5" fill="#e8702a" stroke="#7a2a10" stroke-width=".6"/><circle cx="1321.6" cy="266.0" r="3.2" fill="#e0d01c" stroke="#15110d" stroke-width="1.2"/><circle cx="1321.6" cy="266.0" r="1.5" fill="#e8702a" stroke="#7a2a10" stroke-width=".6"/><circle cx="1356.0" cy="266.0" r="3.2" fill="#e0d01c" stroke="#15110d" stroke-width="1.2"/><circle cx="1356.0" cy="266.0" r="1.5" fill="#e8702a" stroke="#7a2a10" stroke-width=".6"/><circle cx="1355.5" cy="295.5" r="3.2" fill="#e0d01c" stroke="#15110d" stroke-width="1.2"/><circle cx="1355.5" cy="295.5" r="1.5" fill="#e8702a" stroke="#7a2a10" stroke-width=".6"/><circle cx="1387.5" cy="297.0" r="3.2" fill="#e0d01c" stroke="#15110d" stroke-width="1.2"/><circle cx="1387.5" cy="297.0" r="1.5" fill="#e8702a" stroke="#7a2a10" stroke-width=".6"/><circle cx="1355.0" cy="326.0" r="3.2" fill="#e0d01c" stroke="#15110d" stroke-width="1.2"/><circle cx="1355.0" cy="326.0" r="1.5" fill="#e8702a" stroke="#7a2a10" stroke-width=".6"/><circle cx="1318.5" cy="381.0" r="3.2" fill="#e0d01c" stroke="#15110d" stroke-width="1.2"/><circle cx="1318.5" cy="381.0" r="1.5" fill="#e8702a" stroke="#7a2a10" stroke-width=".6"/><circle cx="1382.0" cy="381.5" r="3.2" fill="#e0d01c" stroke="#15110d" stroke-width="1.2"/><circle cx="1382.0" cy="381.5" r="1.5" fill="#e8702a" stroke="#7a2a10" stroke-width=".6"/><circle cx="1381.5" cy="391.0" r="3.2" fill="#e0d01c" stroke="#15110d" stroke-width="1.2"/><circle cx="1381.5" cy="391.0" r="1.5" fill="#e8702a" stroke="#7a2a10" stroke-width=".6"/><circle cx="1385.0" cy="422.0" r="3.2" fill="#e0d01c" stroke="#15110d" stroke-width="1.2"/><circle cx="1385.0" cy="422.0" r="1.5" fill="#e8702a" stroke="#7a2a10" stroke-width=".6"/><circle cx="1315.0" cy="425.5" r="3.2" fill="#e0d01c" stroke="#15110d" stroke-width="1.2"/><circle cx="1315.0" cy="425.5" r="1.5" fill="#e8702a" stroke="#7a2a10" stroke-width=".6"/><circle cx="1316.5" cy="446.0" r="3.2" fill="#e0d01c" stroke="#15110d" stroke-width="1.2"/><circle cx="1316.5" cy="446.0" r="1.5" fill="#e8702a" stroke="#7a2a10" stroke-width=".6"/><circle cx="1326.0" cy="455.0" r="3.2" fill="#e0d01c" stroke="#15110d" stroke-width="1.2"/><circle cx="1326.0" cy="455.0" r="1.5" fill="#e8702a" stroke="#7a2a10" stroke-width=".6"/><circle cx="1353.5" cy="450.5" r="3.2" fill="#e0d01c" stroke="#15110d" stroke-width="1.2"/><circle cx="1353.5" cy="450.5" r="1.5" fill="#e8702a" stroke="#7a2a10" stroke-width=".6"/><circle cx="1383.5" cy="448.0" r="3.2" fill="#e0d01c" stroke="#15110d" stroke-width="1.2"/><circle cx="1383.5" cy="448.0" r="1.5" fill="#e8702a" stroke="#7a2a10" stroke-width=".6"/><circle cx="1379.5" cy="508.0" r="3.2" fill="#e0d01c" stroke="#15110d" stroke-width="1.2"/><circle cx="1379.5" cy="508.0" r="1.5" fill="#e8702a" stroke="#7a2a10" stroke-width=".6"/><circle cx="1379.0" cy="518.5" r="3.2" fill="#e0d01c" stroke="#15110d" stroke-width="1.2"/><circle cx="1379.0" cy="518.5" r="1.5" fill="#e8702a" stroke="#7a2a10" stroke-width=".6"/><circle cx="1321.0" cy="515.5" r="3.2" fill="#e0d01c" stroke="#15110d" stroke-width="1.2"/><circle cx="1321.0" cy="515.5" r="1.5" fill="#e8702a" stroke="#7a2a10" stroke-width=".6"/><circle cx="1380.5" cy="570.0" r="3.2" fill="#e0d01c" stroke="#15110d" stroke-width="1.2"/><circle cx="1380.5" cy="570.0" r="1.5" fill="#e8702a" stroke="#7a2a10" stroke-width=".6"/><circle cx="1320.5" cy="579.0" r="3.2" fill="#e0d01c" stroke="#15110d" stroke-width="1.2"/><circle cx="1320.5" cy="579.0" r="1.5" fill="#e8702a" stroke="#7a2a10" stroke-width=".6"/><circle cx="1349.5" cy="591.0" r="3.2" fill="#e0d01c" stroke="#15110d" stroke-width="1.2"/><circle cx="1349.5" cy="591.0" r="1.5" fill="#e8702a" stroke="#7a2a10" stroke-width=".6"/><circle cx="1288.0" cy="603.0" r="3.2" fill="#e0d01c" stroke="#15110d" stroke-width="1.2"/><circle cx="1288.0" cy="603.0" r="1.5" fill="#e8702a" stroke="#7a2a10" stroke-width=".6"/><circle cx="1346.0" cy="644.0" r="3.2" fill="#e0d01c" stroke="#15110d" stroke-width="1.2"/><circle cx="1346.0" cy="644.0" r="1.5" fill="#e8702a" stroke="#7a2a10" stroke-width=".6"/><circle cx="1356.0" cy="644.0" r="3.2" fill="#e0d01c" stroke="#15110d" stroke-width="1.2"/><circle cx="1356.0" cy="644.0" r="1.5" fill="#e8702a" stroke="#7a2a10" stroke-width=".6"/><circle cx="1314.5" cy="703.0" r="3.2" fill="#e0d01c" stroke="#15110d" stroke-width="1.2"/><circle cx="1314.5" cy="703.0" r="1.5" fill="#e8702a" stroke="#7a2a10" stroke-width=".6"/><circle cx="1348.5" cy="702.0" r="3.2" fill="#e0d01c" stroke="#15110d" stroke-width="1.2"/><circle cx="1348.5" cy="702.0" r="1.5" fill="#e8702a" stroke="#7a2a10" stroke-width=".6"/><circle cx="1275.5" cy="732.0" r="3.2" fill="#e0d01c" stroke="#15110d" stroke-width="1.2"/><circle cx="1275.5" cy="732.0" r="1.5" fill="#e8702a" stroke="#7a2a10" stroke-width=".6"/><circle cx="1309.5" cy="732.0" r="3.2" fill="#e0d01c" stroke="#15110d" stroke-width="1.2"/><circle cx="1309.5" cy="732.0" r="1.5" fill="#e8702a" stroke="#7a2a10" stroke-width=".6"/><circle cx="836.0" cy="427.0" r="3.2" fill="#e0d01c" stroke="#15110d" stroke-width="1.2"/><circle cx="836.0" cy="427.0" r="1.5" fill="#e8702a" stroke="#7a2a10" stroke-width=".6"/><circle cx="869.5" cy="426.5" r="3.2" fill="#e0d01c" stroke="#15110d" stroke-width="1.2"/><circle cx="869.5" cy="426.5" r="1.5" fill="#e8702a" stroke="#7a2a10" stroke-width=".6"/><circle cx="909.5" cy="419.5" r="3.2" fill="#e0d01c" stroke="#15110d" stroke-width="1.2"/><circle cx="909.5" cy="419.5" r="1.5" fill="#e8702a" stroke="#7a2a10" stroke-width=".6"/><circle cx="910.0" cy="430.5" r="3.2" fill="#e0d01c" stroke="#15110d" stroke-width="1.2"/><circle cx="910.0" cy="430.5" r="1.5" fill="#e8702a" stroke="#7a2a10" stroke-width=".6"/><circle cx="895.5" cy="452.0" r="3.2" fill="#e0d01c" stroke="#15110d" stroke-width="1.2"/><circle cx="895.5" cy="452.0" r="1.5" fill="#e8702a" stroke="#7a2a10" stroke-width=".6"/><circle cx="904.5" cy="459.0" r="3.2" fill="#e0d01c" stroke="#15110d" stroke-width="1.2"/><circle cx="904.5" cy="459.0" r="1.5" fill="#e8702a" stroke="#7a2a10" stroke-width=".6"/><circle cx="842.0" cy="459.0" r="3.2" fill="#e0d01c" stroke="#15110d" stroke-width="1.2"/><circle cx="842.0" cy="459.0" r="1.5" fill="#e8702a" stroke="#7a2a10" stroke-width=".6"/><circle cx="904.0" cy="476.0" r="3.2" fill="#e0d01c" stroke="#15110d" stroke-width="1.2"/><circle cx="904.0" cy="476.0" r="1.5" fill="#e8702a" stroke="#7a2a10" stroke-width=".6"/><circle cx="872.5" cy="487.0" r="3.2" fill="#e0d01c" stroke="#15110d" stroke-width="1.2"/><circle cx="872.5" cy="487.0" r="1.5" fill="#e8702a" stroke="#7a2a10" stroke-width=".6"/><circle cx="905.5" cy="507.5" r="3.2" fill="#e0d01c" stroke="#15110d" stroke-width="1.2"/><circle cx="905.5" cy="507.5" r="1.5" fill="#e8702a" stroke="#7a2a10" stroke-width=".6"/><circle cx="860.0" cy="514.5" r="3.2" fill="#e0d01c" stroke="#15110d" stroke-width="1.2"/><circle cx="860.0" cy="514.5" r="1.5" fill="#e8702a" stroke="#7a2a10" stroke-width=".6"/><circle cx="860.0" cy="523.0" r="3.2" fill="#e0d01c" stroke="#15110d" stroke-width="1.2"/><circle cx="860.0" cy="523.0" r="1.5" fill="#e8702a" stroke="#7a2a10" stroke-width=".6"/><circle cx="906.0" cy="549.5" r="3.2" fill="#e0d01c" stroke="#15110d" stroke-width="1.2"/><circle cx="906.0" cy="549.5" r="1.5" fill="#e8702a" stroke="#7a2a10" stroke-width=".6"/><circle cx="902.0" cy="581.0" r="3.2" fill="#e0d01c" stroke="#15110d" stroke-width="1.2"/><circle cx="902.0" cy="581.0" r="1.5" fill="#e8702a" stroke="#7a2a10" stroke-width=".6"/><circle cx="868.5" cy="615.0" r="3.2" fill="#e0d01c" stroke="#15110d" stroke-width="1.2"/><circle cx="868.5" cy="615.0" r="1.5" fill="#e8702a" stroke="#7a2a10" stroke-width=".6"/><circle cx="895.5" cy="612.0" r="3.2" fill="#e0d01c" stroke="#15110d" stroke-width="1.2"/><circle cx="895.5" cy="612.0" r="1.5" fill="#e8702a" stroke="#7a2a10" stroke-width=".6"/><circle cx="836.0" cy="641.0" r="3.2" fill="#e0d01c" stroke="#15110d" stroke-width="1.2"/><circle cx="836.0" cy="641.0" r="1.5" fill="#e8702a" stroke="#7a2a10" stroke-width=".6"/><circle cx="901.5" cy="643.5" r="3.2" fill="#e0d01c" stroke="#15110d" stroke-width="1.2"/><circle cx="901.5" cy="643.5" r="1.5" fill="#e8702a" stroke="#7a2a10" stroke-width=".6"/><circle cx="834.0" cy="704.5" r="3.2" fill="#e0d01c" stroke="#15110d" stroke-width="1.2"/><circle cx="834.0" cy="704.5" r="1.5" fill="#e8702a" stroke="#7a2a10" stroke-width=".6"/><circle cx="865.0" cy="707.5" r="3.2" fill="#e0d01c" stroke="#15110d" stroke-width="1.2"/><circle cx="865.0" cy="707.5" r="1.5" fill="#e8702a" stroke="#7a2a10" stroke-width=".6"/><circle cx="893.0" cy="581.5" r="3.2" fill="#e0d01c" stroke="#15110d" stroke-width="1.2"/><circle cx="893.0" cy="581.5" r="1.5" fill="#e8702a" stroke="#7a2a10" stroke-width=".6"/><circle cx="879.5" cy="334.0" r="1.7" fill="#9a5a3a" stroke="#5a2a20" stroke-width=".6"/><circle cx="1349.0" cy="362.5" r="1.7" fill="#9a5a3a" stroke="#5a2a20" stroke-width=".6"/><circle cx="1316.5" cy="640.0" r="1.7" fill="#9a5a3a" stroke="#5a2a20" stroke-width=".6"/><circle cx="1263.0" cy="232.0" r="1.7" fill="#9a5a3a" stroke="#5a2a20" stroke-width=".6"/><path d="M996.5 372.6L1234.5 369.6L1229.5 592.5L989.6 595.3Z" fill="#96485a" fill-opacity=".5"/><path d="M1003.8 378.3L1227.6 375.5L1222.9 587.0L997.4 589.6Z" fill="#96485a"/><path d="M1010.8 379.3L1004.5 321.4 M1014.6 379.2L1009.8 321.3 M1022.3 379.1L1015.1 321.2 M1026.1 379.1L1020.1 321.2 M1029.9 379.0L1025.3 321.1 M1033.7 379.0L1030.6 321.0 M1041.4 378.9L1035.9 321.0 M1045.2 378.8L1040.3 320.9 M1049.0 378.8L1045.5 320.8 M1056.7 378.7L1050.8 320.8 M1060.5 378.6L1056.9 320.7 M1064.3 378.6L1062.1 320.6 M1068.1 378.5L1066.4 330.1 M1075.8 378.4L1071.9 320.5 M1079.6 378.4L1077.1 320.4 M1083.4 378.3L1082.4 320.4 M1087.3 378.3L1087.6 320.3 M1094.9 378.2L1092.8 320.2 M1098.7 378.1L1098.1 320.2 M1102.6 378.1L1103.3 320.1 M1110.2 378.0L1108.3 329.5 M1114.0 378.0L1113.5 329.4 M1117.9 377.9L1120.3 329.4 M1121.7 377.9L1125.5 329.3 M1129.3 377.8L1130.7 319.8 M1133.2 377.7L1135.6 319.7 M1137.0 377.7L1140.8 319.6 M1144.6 377.6L1146.1 319.6 M1148.5 377.5L1151.3 319.5 M1152.3 377.5L1156.2 328.9 M1156.1 377.4L1161.7 319.4 M1163.8 377.3L1167.0 319.3 M1167.6 377.3L1171.9 328.7 M1171.4 377.2L1178.3 319.1 M1175.3 377.2L1183.5 319.1 M1182.9 377.1L1188.8 319.0 M1186.8 377.0L1194.0 318.9 M1190.6 377.0L1199.1 318.9 M1198.2 376.9L1204.4 318.8 M1202.1 376.8L1209.6 318.7 M1205.9 376.8L1214.8 318.7 M1209.7 376.7L1220.0 318.6 M1217.4 376.7L1225.3 318.5 M1221.2 376.6L1230.5 318.5 M1018.4 379.2L1014.4 340.2 M1037.5 378.9L1035.1 347.3 M1052.8 378.7L1051.0 347.1 M1072.0 378.5L1071.3 359.5 M1091.1 378.2L1090.8 339.2 M1106.4 378.0L1106.9 339.0 M1125.5 377.8L1127.0 338.8 M1140.8 377.6L1143.1 338.5 M1160.0 377.4L1161.6 358.3 M1179.1 377.1L1181.2 358.1 M1194.4 376.9L1199.5 337.8 M1213.6 376.7L1218.5 345.0 M1226.8 387.6L1297.5 374.0 M1226.7 391.1L1297.4 379.3 M1226.6 398.1L1297.3 384.6 M1226.5 401.6L1297.2 390.0 M1226.3 408.5L1297.1 395.3 M1226.2 412.0L1297.0 400.6 M1226.2 415.5L1296.9 406.0 M1226.0 422.5L1296.8 411.3 M1225.9 426.0L1296.7 416.6 M1225.8 433.0L1296.6 421.9 M1225.7 436.5L1296.4 427.3 M1225.5 443.5L1296.3 432.6 M1225.5 447.0L1296.2 437.9 M1225.4 450.5L1296.1 443.3 M1225.2 457.5L1296.0 448.6 M1225.1 461.0L1285.4 454.1 M1225.0 468.0L1285.3 459.4 M1224.9 471.5L1285.2 464.7 M1224.8 475.0L1295.6 469.9 M1224.7 482.0L1295.5 475.2 M1224.6 485.5L1295.4 480.6 M1224.4 492.5L1295.3 485.9 M1224.3 496.0L1295.2 491.2 M1224.3 499.5L1295.1 496.6 M1224.1 506.6L1295.0 501.9 M1224.0 510.1L1284.3 507.3 M1223.9 517.1L1294.7 512.6 M1223.8 520.6L1284.1 518.0 M1223.7 524.1L1294.5 523.2 M1223.6 531.2L1294.4 528.5 M1223.5 534.7L1294.3 533.9 M1223.3 541.7L1294.2 539.2 M1223.2 545.3L1294.1 544.5 M1223.1 552.3L1294.0 549.9 M1223.0 555.8L1293.9 555.2 M1222.9 559.4L1293.8 560.5 M1222.8 566.4L1293.7 565.9 M1222.7 569.9L1293.6 571.2 M1222.5 577.0L1293.5 576.5 M1222.4 580.5L1293.4 581.8 M1226.6 394.6L1276.3 385.1 M1226.4 405.1L1253.9 400.1 M1226.1 419.0L1253.6 414.5 M1225.8 429.5L1253.3 425.3 M1225.6 440.0L1253.1 436.1 M1225.3 454.0L1275.0 447.8 M1225.1 464.5L1274.8 458.9 M1224.7 478.5L1274.5 473.7 M1224.5 489.0L1266.1 485.5 M1224.2 503.0L1274.0 499.6 M1224.0 513.6L1251.5 512.0 M1223.6 527.7L1265.2 526.0 M1223.4 538.2L1273.2 536.8 M1223.2 548.8L1272.9 548.0 M1222.8 562.9L1272.6 562.9 M1222.6 573.5L1250.1 573.8 M1004.6 583.6L994.8 653.6 M1008.4 583.6L1000.0 653.5 M1016.1 583.5L1005.6 653.4 M1020.0 583.4L1010.8 653.4 M1023.8 583.4L1016.1 653.3 M1027.7 583.3L1021.3 653.3 M1035.4 583.2L1027.1 653.2 M1039.2 583.2L1032.3 653.1 M1043.1 583.2L1037.5 653.1 M1050.8 583.1L1043.6 653.0 M1054.6 583.0L1048.9 653.0 M1058.5 583.0L1054.1 652.9 M1062.3 582.9L1059.7 643.1 M1070.0 582.8L1065.4 652.8 M1073.9 582.8L1070.7 652.7 M1077.8 582.8L1076.7 642.9 M1081.6 582.7L1082.0 652.6 M1089.3 582.6L1087.2 652.5 M1093.2 582.6L1092.5 652.5 M1097.0 582.5L1098.9 642.7 M1104.7 582.4L1104.2 642.6 M1108.6 582.4L1109.8 642.6 M1112.4 582.3L1115.0 642.5 M1116.3 582.3L1119.5 652.2 M1124.0 582.2L1124.7 652.1 M1127.9 582.2L1129.9 652.0 M1131.7 582.1L1135.2 652.0 M1139.4 582.0L1141.3 651.9 M1143.3 582.0L1146.5 651.8 M1147.1 581.9L1152.2 642.1 M1151.0 581.9L1157.9 651.7 M1158.7 581.8L1163.1 651.7 M1162.6 581.8L1168.3 651.6 M1166.4 581.7L1173.6 651.5 M1170.3 581.7L1178.8 651.5 M1178.0 581.6L1184.0 651.4 M1181.8 581.5L1190.1 651.4 M1185.7 581.5L1195.4 651.3 M1193.4 581.4L1200.6 651.2 M1197.3 581.4L1206.0 651.2 M1201.1 581.3L1211.2 651.1 M1205.0 581.3L1216.4 651.1 M1212.7 581.2L1221.6 651.0 M1216.6 581.1L1226.9 650.9 M1012.3 583.5L1008.3 613.6 M1031.5 583.3L1026.2 633.8 M1046.9 583.1L1043.3 626.1 M1066.2 582.9L1063.3 633.4 M1085.5 582.7L1084.6 612.7 M1100.9 582.5L1100.6 612.5 M1120.2 582.3L1121.1 632.7 M1135.6 582.1L1137.6 632.6 M1154.9 581.9L1158.2 632.3 M1174.1 581.6L1178.1 624.6 M1189.6 581.4L1194.5 624.4 M1208.9 581.2L1213.1 611.2 M1004.6 390.4L934.6 383.0 M1004.5 393.9L934.5 388.2 M1004.3 400.9L934.3 393.4 M1004.2 404.3L934.1 398.6 M1004.0 411.3L933.9 403.8 M1003.9 414.8L933.8 409.0 M1003.7 421.8L933.6 414.2 M1003.6 425.3L933.4 419.4 M1003.4 432.2L933.3 424.6 M1003.2 435.7L933.0 431.7 M1003.1 439.2L932.8 437.0 M1002.9 446.2L932.6 444.0 M1002.8 449.7L932.4 449.0 M1002.6 456.7L932.3 454.4 M1002.5 460.2L932.1 459.6 M1002.3 467.2L931.9 464.8 M1002.2 470.7L942.2 469.9 M1002.0 477.7L942.1 474.9 M1001.9 481.2L931.4 479.7 M1001.6 488.2L931.3 484.9 M1001.5 491.7L931.1 490.1 M1001.4 495.2L930.9 495.3 M1001.2 502.2L941.2 500.4 M1001.1 505.7L941.1 505.6 M1000.9 512.7L940.9 510.9 M1000.8 516.3L940.7 516.1 M1000.6 523.3L940.5 521.3 M1000.5 526.8L929.8 528.5 M1000.2 533.8L929.6 533.7 M1000.1 537.3L940.0 538.8 M1000.0 540.9L939.8 544.0 M999.8 547.9L929.1 549.0 M999.7 551.4L929.0 554.0 M999.5 558.5L928.8 559.2 M999.4 562.0L928.6 564.4 M999.2 569.0L928.4 569.6 M999.1 572.6L928.3 574.8 M998.8 579.6L928.1 580.0 M998.7 583.1L927.9 585.2 M1004.4 397.4L955.2 392.2 M1004.1 407.8L976.9 405.2 M1003.8 418.3L976.5 415.9 M1003.5 428.7L954.2 424.7 M1003.0 442.7L975.8 440.8 M1002.7 453.2L975.4 451.4 M1002.4 463.7L961.1 461.4 M1002.1 474.2L952.6 471.8 M1001.7 484.7L952.3 482.7 M1001.3 498.7L973.9 497.9 M1001.0 509.2L973.6 508.6 M1000.7 519.8L959.3 519.1 M1000.3 530.3L972.9 530.1 M999.9 544.4L950.3 544.5 M999.6 554.9L972.1 555.2 M999.3 565.5L971.8 566.0 M998.9 576.1L957.4 577.1" fill="none" stroke="#15110d" stroke-width="1.9"/><circle cx="1004.4" cy="323.5" r="1.9" fill="#15110d"/><circle cx="1009.7" cy="323.4" r="1.9" fill="#15110d"/><circle cx="1015.0" cy="323.3" r="1.9" fill="#15110d"/><circle cx="1020.0" cy="323.3" r="1.9" fill="#15110d"/><circle cx="1025.2" cy="323.2" r="1.9" fill="#15110d"/><circle cx="1030.5" cy="323.1" r="1.9" fill="#15110d"/><circle cx="1035.8" cy="323.1" r="1.9" fill="#15110d"/><circle cx="1040.2" cy="323.0" r="1.9" fill="#15110d"/><circle cx="1045.4" cy="323.0" r="1.9" fill="#15110d"/><circle cx="1050.7" cy="322.9" r="1.9" fill="#15110d"/><circle cx="1056.8" cy="322.8" r="1.9" fill="#15110d"/><circle cx="1062.0" cy="322.7" r="1.9" fill="#15110d"/><circle cx="1071.8" cy="322.6" r="1.9" fill="#15110d"/><circle cx="1077.0" cy="322.5" r="1.9" fill="#15110d"/><circle cx="1082.3" cy="322.5" r="1.9" fill="#15110d"/><circle cx="1087.5" cy="322.4" r="1.9" fill="#15110d"/><circle cx="1092.7" cy="322.3" r="1.9" fill="#15110d"/><circle cx="1098.0" cy="322.3" r="1.9" fill="#15110d"/><circle cx="1103.2" cy="322.2" r="1.9" fill="#15110d"/><circle cx="1130.6" cy="321.9" r="1.9" fill="#15110d"/><circle cx="1135.5" cy="321.8" r="1.9" fill="#15110d"/><circle cx="1140.7" cy="321.7" r="1.9" fill="#15110d"/><circle cx="1146.0" cy="321.7" r="1.9" fill="#15110d"/><circle cx="1151.2" cy="321.6" r="1.9" fill="#15110d"/><circle cx="1161.6" cy="321.5" r="1.9" fill="#15110d"/><circle cx="1166.9" cy="321.4" r="1.9" fill="#15110d"/><circle cx="1178.2" cy="321.2" r="1.9" fill="#15110d"/><circle cx="1183.4" cy="321.2" r="1.9" fill="#15110d"/><circle cx="1188.7" cy="321.1" r="1.9" fill="#15110d"/><circle cx="1193.9" cy="321.0" r="1.9" fill="#15110d"/><circle cx="1199.1" cy="321.0" r="1.9" fill="#15110d"/><circle cx="1204.4" cy="320.9" r="1.9" fill="#15110d"/><circle cx="1209.6" cy="320.8" r="1.9" fill="#15110d"/><circle cx="1214.8" cy="320.8" r="1.9" fill="#15110d"/><circle cx="1220.0" cy="320.7" r="1.9" fill="#15110d"/><circle cx="1225.3" cy="320.6" r="1.9" fill="#15110d"/><circle cx="1230.5" cy="320.6" r="1.9" fill="#15110d"/><circle cx="1295.2" cy="374.0" r="1.9" fill="#15110d"/><circle cx="1295.1" cy="379.3" r="1.9" fill="#15110d"/><circle cx="1295.0" cy="384.7" r="1.9" fill="#15110d"/><circle cx="1294.9" cy="390.0" r="1.9" fill="#15110d"/><circle cx="1294.8" cy="395.3" r="1.9" fill="#15110d"/><circle cx="1294.6" cy="400.7" r="1.9" fill="#15110d"/><circle cx="1294.5" cy="406.0" r="1.9" fill="#15110d"/><circle cx="1294.4" cy="411.3" r="1.9" fill="#15110d"/><circle cx="1294.3" cy="416.6" r="1.9" fill="#15110d"/><circle cx="1294.2" cy="422.0" r="1.9" fill="#15110d"/><circle cx="1294.1" cy="427.3" r="1.9" fill="#15110d"/><circle cx="1294.0" cy="432.6" r="1.9" fill="#15110d"/><circle cx="1293.9" cy="438.0" r="1.9" fill="#15110d"/><circle cx="1293.8" cy="443.3" r="1.9" fill="#15110d"/><circle cx="1293.7" cy="448.6" r="1.9" fill="#15110d"/><circle cx="1293.3" cy="469.9" r="1.9" fill="#15110d"/><circle cx="1293.1" cy="475.3" r="1.9" fill="#15110d"/><circle cx="1293.0" cy="480.6" r="1.9" fill="#15110d"/><circle cx="1292.9" cy="485.9" r="1.9" fill="#15110d"/><circle cx="1292.8" cy="491.3" r="1.9" fill="#15110d"/><circle cx="1292.7" cy="496.6" r="1.9" fill="#15110d"/><circle cx="1292.6" cy="501.9" r="1.9" fill="#15110d"/><circle cx="1292.4" cy="512.6" r="1.9" fill="#15110d"/><circle cx="1292.2" cy="523.2" r="1.9" fill="#15110d"/><circle cx="1292.1" cy="528.6" r="1.9" fill="#15110d"/><circle cx="1292.0" cy="533.9" r="1.9" fill="#15110d"/><circle cx="1291.9" cy="539.2" r="1.9" fill="#15110d"/><circle cx="1291.8" cy="544.6" r="1.9" fill="#15110d"/><circle cx="1291.7" cy="549.9" r="1.9" fill="#15110d"/><circle cx="1291.5" cy="555.2" r="1.9" fill="#15110d"/><circle cx="1291.4" cy="560.6" r="1.9" fill="#15110d"/><circle cx="1291.3" cy="565.9" r="1.9" fill="#15110d"/><circle cx="1291.2" cy="571.2" r="1.9" fill="#15110d"/><circle cx="1291.1" cy="576.5" r="1.9" fill="#15110d"/><circle cx="1291.0" cy="581.9" r="1.9" fill="#15110d"/><circle cx="994.9" cy="651.4" r="1.9" fill="#15110d"/><circle cx="1000.1" cy="651.4" r="1.9" fill="#15110d"/><circle cx="1005.7" cy="651.3" r="1.9" fill="#15110d"/><circle cx="1010.9" cy="651.2" r="1.9" fill="#15110d"/><circle cx="1016.2" cy="651.2" r="1.9" fill="#15110d"/><circle cx="1021.4" cy="651.1" r="1.9" fill="#15110d"/><circle cx="1027.2" cy="651.0" r="1.9" fill="#15110d"/><circle cx="1032.4" cy="651.0" r="1.9" fill="#15110d"/><circle cx="1037.6" cy="650.9" r="1.9" fill="#15110d"/><circle cx="1043.7" cy="650.9" r="1.9" fill="#15110d"/><circle cx="1049.0" cy="650.8" r="1.9" fill="#15110d"/><circle cx="1054.2" cy="650.7" r="1.9" fill="#15110d"/><circle cx="1065.5" cy="650.6" r="1.9" fill="#15110d"/><circle cx="1070.8" cy="650.6" r="1.9" fill="#15110d"/><circle cx="1082.1" cy="650.4" r="1.9" fill="#15110d"/><circle cx="1087.3" cy="650.4" r="1.9" fill="#15110d"/><circle cx="1092.6" cy="650.3" r="1.9" fill="#15110d"/><circle cx="1119.6" cy="650.0" r="1.9" fill="#15110d"/><circle cx="1124.8" cy="649.9" r="1.9" fill="#15110d"/><circle cx="1130.0" cy="649.9" r="1.9" fill="#15110d"/><circle cx="1135.3" cy="649.8" r="1.9" fill="#15110d"/><circle cx="1141.4" cy="649.8" r="1.9" fill="#15110d"/><circle cx="1146.6" cy="649.7" r="1.9" fill="#15110d"/><circle cx="1158.0" cy="649.6" r="1.9" fill="#15110d"/><circle cx="1163.2" cy="649.5" r="1.9" fill="#15110d"/><circle cx="1168.4" cy="649.4" r="1.9" fill="#15110d"/><circle cx="1173.7" cy="649.4" r="1.9" fill="#15110d"/><circle cx="1178.9" cy="649.3" r="1.9" fill="#15110d"/><circle cx="1184.1" cy="649.3" r="1.9" fill="#15110d"/><circle cx="1190.2" cy="649.2" r="1.9" fill="#15110d"/><circle cx="1195.5" cy="649.1" r="1.9" fill="#15110d"/><circle cx="1200.7" cy="649.1" r="1.9" fill="#15110d"/><circle cx="1206.0" cy="649.0" r="1.9" fill="#15110d"/><circle cx="1211.2" cy="649.0" r="1.9" fill="#15110d"/><circle cx="1216.4" cy="648.9" r="1.9" fill="#15110d"/><circle cx="1221.6" cy="648.8" r="1.9" fill="#15110d"/><circle cx="1226.9" cy="648.8" r="1.9" fill="#15110d"/><circle cx="937.0" cy="383.0" r="1.9" fill="#15110d"/><circle cx="936.8" cy="388.2" r="1.9" fill="#15110d"/><circle cx="936.6" cy="393.4" r="1.9" fill="#15110d"/><circle cx="936.4" cy="398.6" r="1.9" fill="#15110d"/><circle cx="936.3" cy="403.8" r="1.9" fill="#15110d"/><circle cx="936.1" cy="409.0" r="1.9" fill="#15110d"/><circle cx="935.9" cy="414.2" r="1.9" fill="#15110d"/><circle cx="935.8" cy="419.4" r="1.9" fill="#15110d"/><circle cx="935.6" cy="424.6" r="1.9" fill="#15110d"/><circle cx="935.3" cy="431.7" r="1.9" fill="#15110d"/><circle cx="935.2" cy="437.0" r="1.9" fill="#15110d"/><circle cx="934.9" cy="444.0" r="1.9" fill="#15110d"/><circle cx="934.8" cy="449.0" r="1.9" fill="#15110d"/><circle cx="934.6" cy="454.4" r="1.9" fill="#15110d"/><circle cx="934.4" cy="459.6" r="1.9" fill="#15110d"/><circle cx="934.2" cy="464.8" r="1.9" fill="#15110d"/><circle cx="933.8" cy="479.7" r="1.9" fill="#15110d"/><circle cx="933.6" cy="484.9" r="1.9" fill="#15110d"/><circle cx="933.4" cy="490.1" r="1.9" fill="#15110d"/><circle cx="933.2" cy="495.3" r="1.9" fill="#15110d"/><circle cx="932.1" cy="528.5" r="1.9" fill="#15110d"/><circle cx="932.0" cy="533.7" r="1.9" fill="#15110d"/><circle cx="931.5" cy="549.0" r="1.9" fill="#15110d"/><circle cx="931.3" cy="554.0" r="1.9" fill="#15110d"/><circle cx="931.1" cy="559.2" r="1.9" fill="#15110d"/><circle cx="930.9" cy="564.4" r="1.9" fill="#15110d"/><circle cx="930.8" cy="569.6" r="1.9" fill="#15110d"/><circle cx="930.6" cy="574.8" r="1.9" fill="#15110d"/><circle cx="930.4" cy="580.0" r="1.9" fill="#15110d"/><circle cx="930.3" cy="585.2" r="1.9" fill="#15110d"/><circle cx="1066.4" cy="330.1" r="1.5" fill="#d8c060" stroke="#15110d" stroke-width="1.5"/><circle cx="1108.3" cy="329.5" r="1.5" fill="#d8c060" stroke="#15110d" stroke-width="1.5"/><circle cx="1113.5" cy="329.4" r="1.5" fill="#d8c060" stroke="#15110d" stroke-width="1.5"/><circle cx="1120.3" cy="329.4" r="1.5" fill="#d8c060" stroke="#15110d" stroke-width="1.5"/><circle cx="1125.5" cy="329.3" r="1.5" fill="#d8c060" stroke="#15110d" stroke-width="1.5"/><circle cx="1156.2" cy="328.9" r="1.5" fill="#d8c060" stroke="#15110d" stroke-width="1.5"/><circle cx="1171.9" cy="328.7" r="1.5" fill="#d8c060" stroke="#15110d" stroke-width="1.5"/><circle cx="1285.4" cy="454.1" r="1.5" fill="#d8c060" stroke="#15110d" stroke-width="1.5"/><circle cx="1285.3" cy="459.4" r="1.5" fill="#d8c060" stroke="#15110d" stroke-width="1.5"/><circle cx="1285.2" cy="464.7" r="1.5" fill="#d8c060" stroke="#15110d" stroke-width="1.5"/><circle cx="1284.3" cy="507.3" r="1.5" fill="#d8c060" stroke="#15110d" stroke-width="1.5"/><circle cx="1284.1" cy="518.0" r="1.5" fill="#d8c060" stroke="#15110d" stroke-width="1.5"/><circle cx="1059.7" cy="643.1" r="1.5" fill="#d8c060" stroke="#15110d" stroke-width="1.5"/><circle cx="1076.7" cy="642.9" r="1.5" fill="#d8c060" stroke="#15110d" stroke-width="1.5"/><circle cx="1098.9" cy="642.7" r="1.5" fill="#d8c060" stroke="#15110d" stroke-width="1.5"/><circle cx="1104.2" cy="642.6" r="1.5" fill="#d8c060" stroke="#15110d" stroke-width="1.5"/><circle cx="1109.8" cy="642.6" r="1.5" fill="#d8c060" stroke="#15110d" stroke-width="1.5"/><circle cx="1115.0" cy="642.5" r="1.5" fill="#d8c060" stroke="#15110d" stroke-width="1.5"/><circle cx="1152.2" cy="642.1" r="1.5" fill="#d8c060" stroke="#15110d" stroke-width="1.5"/><circle cx="942.2" cy="469.9" r="1.5" fill="#d8c060" stroke="#15110d" stroke-width="1.5"/><circle cx="942.1" cy="474.9" r="1.5" fill="#d8c060" stroke="#15110d" stroke-width="1.5"/><circle cx="941.2" cy="500.4" r="1.5" fill="#d8c060" stroke="#15110d" stroke-width="1.5"/><circle cx="941.1" cy="505.6" r="1.5" fill="#d8c060" stroke="#15110d" stroke-width="1.5"/><circle cx="940.9" cy="510.9" r="1.5" fill="#d8c060" stroke="#15110d" stroke-width="1.5"/><circle cx="940.7" cy="516.1" r="1.5" fill="#d8c060" stroke="#15110d" stroke-width="1.5"/><circle cx="940.5" cy="521.3" r="1.5" fill="#d8c060" stroke="#15110d" stroke-width="1.5"/><circle cx="940.0" cy="538.8" r="1.5" fill="#d8c060" stroke="#15110d" stroke-width="1.5"/><circle cx="939.8" cy="544.0" r="1.5" fill="#d8c060" stroke="#15110d" stroke-width="1.5"/><path d="M1010.4 390.4L1221.0 387.7L1216.6 579.5L1004.6 582.0Z" fill="#da8c27" stroke="#7a3a18" stroke-width="1"/><circle cx="1015.0" cy="395.0" r="2" fill="#e8862a" stroke="#c0341c" stroke-width=".9"/><circle cx="1042.0" cy="395.0" r="2" fill="#e8862a" stroke="#c0341c" stroke-width=".9"/><path d="M1080.0 391.1l2.4 2.4-2.4 2.4-2.4-2.4z" fill="#e8552a" stroke="#b03018" stroke-width=".7"/><circle cx="1114.5" cy="393.0" r="2" fill="#e8862a" stroke="#c0341c" stroke-width=".9"/><circle cx="1149.0" cy="393.0" r="2" fill="#e8862a" stroke="#c0341c" stroke-width=".9"/><circle cx="1214.5" cy="392.0" r="2" fill="#e8862a" stroke="#c0341c" stroke-width=".9"/><path d="M1079.0 419.6l2.4 2.4-2.4 2.4-2.4-2.4z" fill="#e8552a" stroke="#b03018" stroke-width=".7"/><circle cx="1114.0" cy="421.0" r="2" fill="#e8862a" stroke="#c0341c" stroke-width=".9"/><circle cx="1183.5" cy="420.0" r="2" fill="#e8862a" stroke="#c0341c" stroke-width=".9"/><circle cx="1013.0" cy="454.0" r="2" fill="#e8862a" stroke="#c0341c" stroke-width=".9"/><path d="M1112.5 450.1l2.4 2.4-2.4 2.4-2.4-2.4z" fill="#e8552a" stroke="#b03018" stroke-width=".7"/><circle cx="1146.0" cy="454.0" r="2" fill="#e8862a" stroke="#c0341c" stroke-width=".9"/><circle cx="1183.0" cy="452.0" r="2" fill="#e8862a" stroke="#c0341c" stroke-width=".9"/><circle cx="1012.0" cy="485.5" r="2" fill="#e8862a" stroke="#c0341c" stroke-width=".9"/><path d="M1042.5 482.6l2.4 2.4-2.4 2.4-2.4-2.4z" fill="#e8552a" stroke="#b03018" stroke-width=".7"/><circle cx="1112.5" cy="484.0" r="2" fill="#e8862a" stroke="#c0341c" stroke-width=".9"/><circle cx="1182.0" cy="483.5" r="2" fill="#e8862a" stroke="#c0341c" stroke-width=".9"/><circle cx="1043.5" cy="517.0" r="2" fill="#e8862a" stroke="#c0341c" stroke-width=".9"/><path d="M1111.5 513.6l2.4 2.4-2.4 2.4-2.4-2.4z" fill="#e8552a" stroke="#b03018" stroke-width=".7"/><circle cx="1181.5" cy="515.0" r="2" fill="#e8862a" stroke="#c0341c" stroke-width=".9"/><circle cx="1043.0" cy="547.0" r="2" fill="#e8862a" stroke="#c0341c" stroke-width=".9"/><circle cx="1093.5" cy="548.0" r="2" fill="#e8862a" stroke="#c0341c" stroke-width=".9"/><path d="M1111.5 543.6l2.4 2.4-2.4 2.4-2.4-2.4z" fill="#e8552a" stroke="#b03018" stroke-width=".7"/><circle cx="1128.0" cy="548.0" r="2" fill="#e8862a" stroke="#c0341c" stroke-width=".9"/><circle cx="1184.0" cy="550.0" r="2" fill="#e8862a" stroke="#c0341c" stroke-width=".9"/><circle cx="1010.0" cy="577.0" r="2" fill="#e8862a" stroke="#c0341c" stroke-width=".9"/><path d="M1075.0 573.6l2.4 2.4-2.4 2.4-2.4-2.4z" fill="#e8552a" stroke="#b03018" stroke-width=".7"/><circle cx="1110.0" cy="576.0" r="2" fill="#e8862a" stroke="#c0341c" stroke-width=".9"/><circle cx="1145.5" cy="575.5" r="2" fill="#e8862a" stroke="#c0341c" stroke-width=".9"/><circle cx="1210.5" cy="574.5" r="2" fill="#e8862a" stroke="#c0341c" stroke-width=".9"/><circle cx="967.5" cy="352.0" r="1.7" fill="#e8a02a" stroke="#b0341c" stroke-width=".8"/><circle cx="996.5" cy="363.0" r="1.7" fill="#e8a02a" stroke="#b0341c" stroke-width=".8"/><circle cx="980.0" cy="374.0" r="1.7" fill="#e8a02a" stroke="#b0341c" stroke-width=".8"/><circle cx="1268.0" cy="348.5" r="1.7" fill="#e8a02a" stroke="#b0341c" stroke-width=".8"/><circle cx="1236.0" cy="360.0" r="1.7" fill="#e8a02a" stroke="#b0341c" stroke-width=".8"/><circle cx="1248.5" cy="374.0" r="1.7" fill="#e8a02a" stroke="#b0341c" stroke-width=".8"/><circle cx="951.0" cy="622.5" r="1.7" fill="#e8a02a" stroke="#b0341c" stroke-width=".8"/><circle cx="973.0" cy="610.0" r="1.7" fill="#e8a02a" stroke="#b0341c" stroke-width=".8"/><circle cx="990.0" cy="596.5" r="1.7" fill="#e8a02a" stroke="#b0341c" stroke-width=".8"/><circle cx="1259.5" cy="619.5" r="1.7" fill="#e8a02a" stroke="#b0341c" stroke-width=".8"/><circle cx="1230.5" cy="607.5" r="1.7" fill="#e8a02a" stroke="#b0341c" stroke-width=".8"/><circle cx="1245.5" cy="595.0" r="1.7" fill="#e8a02a" stroke="#b0341c" stroke-width=".8"/><circle cx="1012.0" cy="346.5" r="1.7" fill="#e8a02a" stroke="#b0341c" stroke-width=".8"/><circle cx="1082.5" cy="340.0" r="1.7" fill="#e8a02a" stroke="#b0341c" stroke-width=".8"/><circle cx="1152.0" cy="339.0" r="1.7" fill="#e8a02a" stroke="#b0341c" stroke-width=".8"/><circle cx="1099.0" cy="360.5" r="1.7" fill="#e8a02a" stroke="#b0341c" stroke-width=".8"/><circle cx="1176.5" cy="361.0" r="1.7" fill="#e8a02a" stroke="#b0341c" stroke-width=".8"/><circle cx="1024.0" cy="654.0" r="1.7" fill="#e8a02a" stroke="#b0341c" stroke-width=".8"/><circle cx="1084.0" cy="631.0" r="1.7" fill="#e8a02a" stroke="#b0341c" stroke-width=".8"/><circle cx="1145.0" cy="642.0" r="1.7" fill="#e8a02a" stroke="#b0341c" stroke-width=".8"/><circle cx="1217.0" cy="629.0" r="1.7" fill="#e8a02a" stroke="#b0341c" stroke-width=".8"/><path d="M1097 388V348.8H1135.5V388" fill="none" stroke="#3a8a4a" stroke-width="1.7"/><path d="M1007 470H964.4V512.8H1007" fill="none" stroke="#3a8a4a" stroke-width="1.7"/><path d="M1220 466H1262.5V512H1220" fill="none" stroke="#3a8a4a" stroke-width="1.7"/><path d="M1090.8 583V621.4H1127.5V583" fill="none" stroke="#3a8a4a" stroke-width="1.7"/><rect x="1282" y="499" width="19" height="14" fill="none" stroke="#2f8a45" stroke-width="1.6"/><rect x="1285" y="502.500" width="13" height="7.500" fill="#e0d01c" stroke="#15110d" stroke-width="1.100"/><circle cx="1294.500" cy="506.300" r="1.600" fill="#e8862a" stroke="#15110d" stroke-width=".8"/></g>
<path d="M1848 789h34" stroke="#e03020" stroke-width="3.500"/><path d="M1880 784l11 5-11 5z" fill="#e03020"/><path d="M1848 789v-28" stroke="#7cb88a" stroke-width="5"/><path d="M1842 762l6-12 6 12z" fill="#7cb88a"/><path d="M1847.500 790v-12" stroke="#1a1a8a" stroke-width="4.500"/><circle cx="1846" cy="776" r="5" fill="#7a80c8"/><circle cx="1847" cy="790" r="3.500" fill="#c02818"/><text x="1896" y="793" font-size="14" font-weight="bold" fill="#e03020" font-family="Liberation Sans">x</text><text x="1843" y="744" font-size="14" font-weight="bold" fill="#128a22" font-family="Liberation Sans">y</text><text x="1838" y="772" font-size="14" font-weight="bold" fill="#1818e0" font-family="Liberation Sans">z</text>
</svg>
<div class="b" style="left:350px;top:858px;width:1570px;height:20px;background:#fcfcfc;"></div>
<div class="b" style="left:350px;top:858px;width:99.5px;height:17px;background:#fff;"></div>
<div class="b" style="left:350px;top:874px;width:99.5px;height:2px;background:#1c5a9a;"></div>
<div class="b" style="left:449px;top:858px;width:1px;height:16px;background:#d0d0d0;"></div>
<div class="t" style="left:393.50px;top:860.05px;font-size:9.5px;line-height:13.5px;color:#222;letter-spacing:-0.072px;">3D</div>
<div class="t" style="left:477.70px;top:859.25px;font-size:9.5px;line-height:13.5px;color:#222;letter-spacing:-0.006px;">Schematic</div>
<div class="b" style="left:549px;top:861px;width:1px;height:12px;background:#999;"></div>
<div class="b" style="left:350px;top:878px;width:1570px;height:3px;background:#f2f2f2;"></div>
<div class="b" style="left:350px;top:881px;width:787px;height:16px;background:#fff;"></div>
<div class="t" style="left:352.80px;top:881.55px;font-size:9.5px;line-height:13.5px;color:#111;letter-spacing:0.155px;">Result Navigator</div>
<svg class="b" style="left:1123px;top:883px;" width="10" height="10" viewBox="0 0 10 10"><path d="M1.500 1.500l7 7M8.500 1.500l-7 7" stroke="#222" stroke-width="1.500"/></svg>
<div class="b" style="left:350px;top:896px;width:786px;height:98px;background:#fff;border:1px solid #8e8e8e;box-sizing:border-box;"></div>
<div class="b" style="left:351px;top:897px;width:22.5px;height:22px;background:#f4f4f4;"></div>
<div class="b" style="left:351px;top:919px;width:22.5px;height:21px;background:#e4e4e4;"></div>
<div class="b" style="left:351px;top:940px;width:784.5px;height:1px;background:#d4d4d4;"></div>
<svg class="b" style="left:353px;top:899px;" width="20" height="42" viewBox="0 0 20 42"><path d="M3 3h11l-4.300 5.500v5.500l-2.400 1.500v-7z" fill="none" stroke="#555" stroke-width="1"/><path d="M6 31.500h4m0-2.500v5m1-4.500h3.500v4H11" stroke="#888" stroke-width="1" fill="none"/></svg>
<div class="t" style="left:382.00px;top:901.25px;font-size:12.5px;line-height:16.5px;color:#333;letter-spacing:-0.484px;">3D Run ID</div>
<div class="t" style="left:378.00px;top:921.55px;font-size:12.5px;line-height:16.5px;color:#a0a0a0;letter-spacing:-0.463px;">0: Current Run</div>
<div class="b" style="left:350px;top:994px;width:97.5px;height:18px;background:#f6f6f6;border-right:1px solid #ccc;box-sizing:border-box;"></div>
<div class="b" style="left:350px;top:1011.5px;width:97.5px;height:2px;background:#1c5a9a;"></div>
<div class="t" style="left:362.30px;top:997.75px;font-size:9.5px;line-height:13.5px;color:#333;letter-spacing:0.123px;">Result Navigator</div>
<div class="t" style="left:459.30px;top:996.75px;font-size:9.5px;line-height:13.5px;color:#111;letter-spacing:0.138px;">Parameter List</div>
<div class="b" style="left:534.5px;top:997px;width:1px;height:12px;background:#999;"></div>
<div class="b" style="left:1140px;top:881px;width:780px;height:16px;background:#fff;"></div>
<div class="t" style="left:1143.00px;top:881.55px;font-size:9.5px;line-height:13.5px;color:#112;letter-spacing:-0.162px;">Messages</div>
<svg class="b" style="left:1906px;top:883px;" width="10" height="10" viewBox="0 0 10 10"><path d="M1.500 1.500l7 7M8.500 1.500l-7 7" stroke="#222" stroke-width="1.500"/></svg>
<div class="b" style="left:1140px;top:897px;width:780px;height:19px;background:#fbfbfb;"></div>
<div class="b" style="left:1167.5px;top:896px;width:22px;height:18px;background:#ececec;"></div>
<div class="b" style="left:1195.5px;top:896px;width:22px;height:18px;background:#ececec;"></div>
<div class="b" style="left:1140px;top:916px;width:780px;height:78px;background:#fff;border:1px solid #8e8e8e;box-sizing:border-box;"></div>
<div class="b" style="left:1160px;top:938.5px;width:1754px;height:1px;background:#d8d8d8;"></div>
<div class="b" style="left:1160px;top:959.5px;width:1754px;height:1px;background:#d8d8d8;"></div>
<svg class="b" style="left:1140px;top:880px;" width="780" height="120" viewBox="1140 880 780 120"><circle cx="1151" cy="905" r="6.300" fill="#a9a9a9" stroke="#8d8d8d" stroke-width="1"/><path d="M1148 902l6 6M1154 902l-6 6" stroke="#fff" stroke-width="1.700"/><path d="M1178.5 899l6.5 11.375h-13z" fill="#f2b41c" stroke="#a8760a" stroke-width="1" stroke-linejoin="round"/><path d="M1178.5 902.5v4.3" stroke="#222" stroke-width="1.500"/><circle cx="1178.5" cy="908.6" r=".9" fill="#222"/><circle cx="1206.5" cy="904.5" r="6" fill="#f8f8f8" stroke="#777" stroke-width="1"/><path d="M1206.7 903.7v3.800M1205.4 907.5h2.600M1205.5 903.7h1.500" stroke="#1a2a8a" stroke-width="1.300" fill="none"/><circle cx="1206.5" cy="901.5" r=".95" fill="#1a2a8a"/><path d="M1241 901.500h7M1241 904.500h7M1236 907.800h12" stroke="#222" stroke-width="1.400"/><path d="M1235 899.500l5 5.500M1240 899.500l-5 5.500" stroke="#d03020" stroke-width="1.500"/><path d="M1151.7 922.7l5.8 10.15h-11.6z" fill="#f2b41c" stroke="#a8760a" stroke-width="1" stroke-linejoin="round"/><path d="M1151.7 925.5v4.3" stroke="#222" stroke-width="1.500"/><circle cx="1151.7" cy="931.6" r=".9" fill="#222"/><path d="M1151.7 943.7l5.8 10.15h-11.6z" fill="#f2b41c" stroke="#a8760a" stroke-width="1" stroke-linejoin="round"/><path d="M1151.7 946.5v4.3" stroke="#222" stroke-width="1.500"/><circle cx="1151.7" cy="952.6" r=".9" fill="#222"/><circle cx="1151.7" cy="969.5" r="6" fill="#f8f8f8" stroke="#777" stroke-width="1"/><path d="M1151.9 968.7v3.800M1150.6 972.5h2.600M1150.7 968.7h1.500" stroke="#1a2a8a" stroke-width="1.300" fill="none"/><circle cx="1151.7" cy="966.5" r=".95" fill="#1a2a8a"/></svg>
<div class="t" style="left:1164.30px;top:920.75px;font-size:9.5px;line-height:13.5px;color:#222;letter-spacing:0.142px;">The PCB conversion issued some warnings, please check the logfile CPU_ic_r1.log (see navigation tree).</div>
<div class="t" style="left:1164.30px;top:941.75px;font-size:9.5px;line-height:13.5px;color:#222;letter-spacing:0.209px;">1 warning occurred.</div>
<div class="t" style="left:1164.30px;top:962.55px;font-size:9.5px;line-height:13.5px;color:#222;letter-spacing:0.186px;">Boolean insert traces into substrates...</div>
<div class="b" style="left:1140px;top:994px;width:67px;height:18px;background:#f6f6f6;border-right:1px solid #ccc;box-sizing:border-box;"></div>
<div class="b" style="left:1140px;top:1011.5px;width:67px;height:2px;background:#1c5a9a;"></div>
<div class="t" style="left:1152.30px;top:997.75px;font-size:9.5px;line-height:13.5px;color:#333;letter-spacing:-0.112px;">Messages</div>
<div class="t" style="left:1219.00px;top:996.75px;font-size:9.5px;line-height:13.5px;color:#111;letter-spacing:-0.002px;">Progress</div>
<div class="b" style="left:1268px;top:997px;width:1px;height:12px;background:#999;"></div>
<div class="b" style="left:0px;top:1014px;width:1920px;height:18px;background:#f0f0f0;"></div>
<div class="t" style="left:6.00px;top:1019.50px;font-size:12px;line-height:16px;color:#222;letter-spacing:-0.570px;">Running...</div>
<svg class="b" style="left:1440px;top:1014px;" width="480" height="18" viewBox="1440 1014 480 18"><rect x="1457" y="1017" width="22" height="15" fill="#dcdcdc"/><circle cx="1467" cy="1026" r="4" fill="none" stroke="#444" stroke-width="1"/><path d="M1470 1029l4 4" stroke="#444" stroke-width="1.500"/><path d="M1482 1026h15M1489.500 1019v14" stroke="#e0901a" stroke-width="1.600"/><ellipse cx="1512" cy="1026" rx="7" ry="5" fill="#e0901a" stroke="#444" stroke-width=".8"/><circle cx="1533" cy="1025" r="4.500" fill="none" stroke="#444" stroke-width="1"/><circle cx="1556" cy="1027" r="4.500" fill="none" stroke="#e0901a" stroke-width="2"/><rect x="1578" y="1021" width="12" height="12" fill="none" stroke="#c05a2a" stroke-width="1"/><rect x="1600" y="1022" width="10" height="10" fill="#8a4a2a"/><rect x="1627" y="1021" width="12" height="11" fill="none" stroke="#666" stroke-width="1"/><circle cx="1671" cy="1022" r="4" fill="#3a9a3a"/><rect x="1662" y="1024" width="10" height="8" fill="none" stroke="#444" stroke-width="1"/><path d="M1570 1019v13M1653 1019v13M1766 1019v13M1821 1019v13M1915 1019v13" stroke="#999" stroke-width="1"/></svg>
<div class="b" style="left:0;top:870px;width:1920px;height:162px;background:linear-gradient(to bottom,rgba(0,0,0,0) 0%,rgba(0,0,0,.03) 12%,rgba(0,0,0,.08) 24%,rgba(0,0,0,.17) 38%,rgba(0,0,0,.33) 56%,rgba(0,0,0,.50) 74%,rgba(0,0,0,.62) 87%,rgba(0,0,0,.76) 100%);"></div>
<div class="t" style="left:1689.00px;top:1019.50px;font-size:12px;line-height:16px;color:#6c6c6c;letter-spacing:-0.282px;">Raster=1.000</div>
<div class="t" style="left:1774.00px;top:1019.50px;font-size:12px;line-height:16px;color:#6c6c6c;letter-spacing:0.555px;">Normal</div>
<div class="t" style="left:1829.00px;top:1019.50px;font-size:12px;line-height:16px;color:#6c6c6c;letter-spacing:-0.262px;">mm  GHz  ns  K</div>
<div class="b" style="left:40px;top:1014.5px;width:5px;height:18px;background:rgba(205,205,205,.5);"></div>
<div class="b" style="left:51px;top:1014.5px;width:5px;height:18px;background:rgba(205,205,205,.5);"></div>
<div class="t" style="left:80.00px;top:1015.30px;font-size:14px;line-height:18px;color:#b4b4b4;letter-spacing:0.029px;">2:05 / 3:17</div>
<svg class="b" style="left:0px;top:970px;" width="1920" height="62" viewBox="0 970 1920 62"><path d="M1733 1018h5l7-6v22l-7-6h-5z" fill="#b9b9b9"/><path d="M1749 1016c4 3 4 11 0 14M1753 1012c7 5 7 17 0 22" fill="none" stroke="#b9b9b9" stroke-width="2"/><path d="M1799 1021h6v-6M1811 1015v6h6M1799 1027h6v6M1811 1033v-6h6" fill="none" stroke="#b9b9b9" stroke-width="2.200"/><circle cx="1872" cy="1016.500" r="2.300" fill="#b9b9b9"/><circle cx="1872" cy="1024.500" r="2.300" fill="#b9b9b9"/><circle cx="1872" cy="1032" r="2.300" fill="#b9b9b9"/><path d="M258.500 981.500v15l3.500-3.300 2.500 5.300 2.300-1.100-2.500-5.200h4.700z" fill="none" stroke="#1a1a1a" stroke-width="1"/></svg>
</body></html>
